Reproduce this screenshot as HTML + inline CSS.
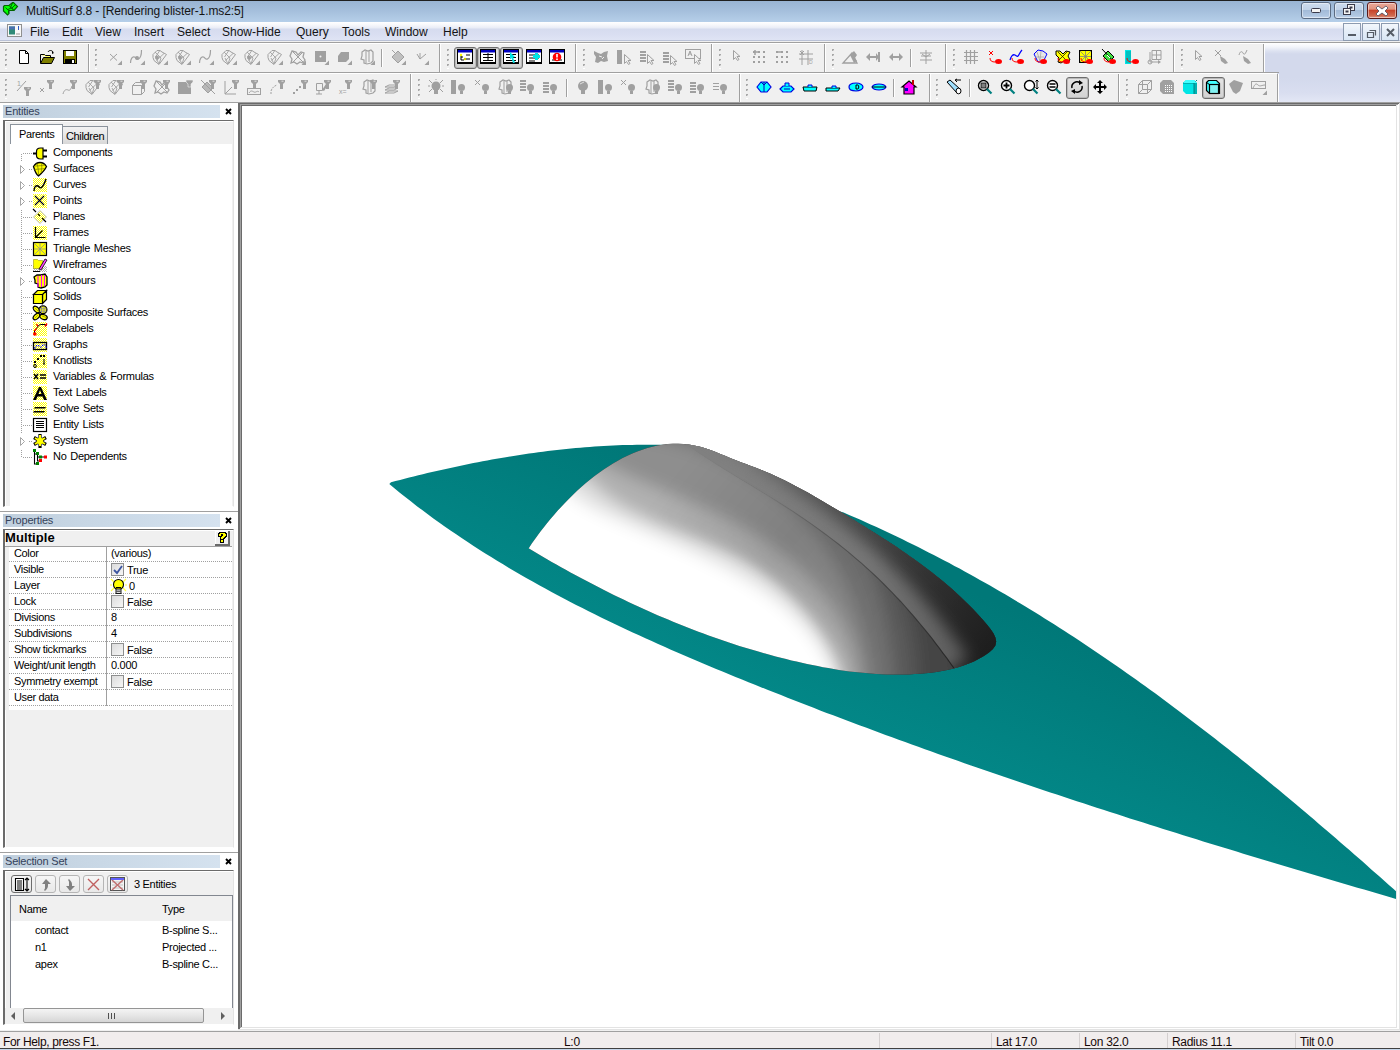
<!DOCTYPE html>
<html><head><meta charset="utf-8"><title>MultiSurf</title>
<style>
*{box-sizing:border-box}
html,body{margin:0;padding:0;width:1400px;height:1050px;overflow:hidden;background:#fff;font-family:"Liberation Sans", sans-serif;color:#000}
.a{position:absolute}
svg{overflow:visible}
</style></head><body>
<svg width="0" height="0" style="position:absolute"><defs>
<pattern id="dy" width="2" height="2" patternUnits="userSpaceOnUse"><rect width="2" height="2" fill="#fff"/><rect width="1" height="1" fill="#ff0"/><rect x="1" y="1" width="1" height="1" fill="#ff0"/></pattern>
<pattern id="dg" width="2" height="2" patternUnits="userSpaceOnUse"><rect width="2" height="2" fill="#fff"/><rect width="1" height="1" fill="#b0b0b0"/><rect x="1" y="1" width="1" height="1" fill="#b0b0b0"/></pattern>
</defs></svg>

<div class="a" style="left:0px;top:0px;width:1400px;height:1px;background:#1f1f1f;"></div>
<div class="a" style="left:0px;top:1px;width:1400px;height:21px;background:linear-gradient(#99b4d3,#a6c0dd 50%,#b6cfe9);"></div>
<svg class="a" style="left:0px;top:0px;" width="20" height="17" viewBox="0 0 20 17"><path d="M3.5 6.5L4.5 5.5H9L12.5 2.5H13.5L17.5 6.5L14 10.5H9V13.5L7.5 15L3.5 11Z" fill="#00ff00" stroke="#006400" stroke-width="1.2"/><path d="M5.5 7.5L8.5 10.5V13M9 5.5L14 10.5M12.5 3L10.5 7.5L13.5 9.5M8 9.5L11 8M15 5L12 8" fill="none" stroke="#006400" stroke-width="1"/></svg>
<div class="a" style="left:26px;top:4.84px;font-size:12px;line-height:12px;color:#141414;white-space:nowrap;letter-spacing:-0.1px">MultiSurf 8.8 - [Rendering blister-1.ms2:5]</div>
<div class="a" style="left:1301px;top:2px;width:30px;height:17px;border:1px solid #5b6b82;border-radius:3px;background:linear-gradient(#cddcee 0%,#c0d2e8 45%,#a3bbd8 50%,#b1c7e2 85%,#c6d8ee 100%);box-shadow:inset 0 0 0 1px rgba(255,255,255,.45)"></div>
<div class="a" style="left:1334px;top:2px;width:30px;height:17px;border:1px solid #5b6b82;border-radius:3px;background:linear-gradient(#cddcee 0%,#c0d2e8 45%,#a3bbd8 50%,#b1c7e2 85%,#c6d8ee 100%);box-shadow:inset 0 0 0 1px rgba(255,255,255,.45)"></div>
<div class="a" style="left:1367px;top:2px;width:30px;height:17px;border:1px solid #5a1a1a;border-radius:3px;background:linear-gradient(#eaa899 0%,#e09480 40%,#c8442b 50%,#d06a50 85%,#e39a88 100%);box-shadow:inset 0 0 0 1px rgba(255,255,255,.45)"></div>
<svg class="a" style="left:1311px;top:8px;" width="10" height="5" viewBox="0 0 10 5"><rect x="0.5" y="0.5" width="9" height="4" rx="1" fill="#f4f4f4" stroke="#3a3a4a"/></svg>
<svg class="a" style="left:1343px;top:4px;" width="12" height="11" viewBox="0 0 12 11"><rect x="4.5" y="0.5" width="7" height="6" fill="#f4f4f4" stroke="#3a3a4a"/><rect x="6.5" y="2.5" width="3" height="2" fill="#3a3a4a"/><rect x="0.5" y="4.5" width="7" height="6" fill="#f4f4f4" stroke="#3a3a4a"/><rect x="2.5" y="6.5" width="3" height="2" fill="#3a3a4a"/></svg>
<svg class="a" style="left:1376px;top:5px;" width="12" height="12" viewBox="0 0 12 12"><path d="M2 1l4 3 4-3 2 2-3 3 3 3-2 2-4-3-4 3-2-2 3-3-3-3z" fill="#fff" stroke="#4a4a5a" stroke-width=".8"/></svg>
<div class="a" style="left:0px;top:22px;width:1400px;height:18px;background:linear-gradient(#ffffff 0px,#f6f7fb 3px,#e9ecf6 6px,#d6dcef 7px,#d9def1 12px,#dfe4f4 18px);"></div>
<div class="a" style="left:0px;top:40px;width:1400px;height:1px;background:#b9c1d6;"></div>
<div class="a" style="left:0px;top:41px;width:1400px;height:1px;background:#f0f0f0;"></div>
<svg class="a" style="left:7px;top:24px;" width="15" height="13" viewBox="0 0 15 13"><rect x="0.5" y="0.5" width="14" height="12" fill="#f8f8f8" stroke="#909090"/><rect x="2" y="2.5" width="6" height="8" fill="#2f8a78"/><rect x="2" y="2.5" width="6" height="3" fill="#4a70b0"/><rect x="11" y="2" width="1" height="4" fill="#2a5ac0"/><rect x="9" y="9" width="4" height="2" fill="#c8c8c8"/></svg>
<div class="a" style="left:30px;top:25.84px;font-size:12px;line-height:12px;color:#141414;white-space:nowrap;letter-spacing:0px">File</div>
<div class="a" style="left:62px;top:25.84px;font-size:12px;line-height:12px;color:#141414;white-space:nowrap;letter-spacing:0px">Edit</div>
<div class="a" style="left:95px;top:25.84px;font-size:12px;line-height:12px;color:#141414;white-space:nowrap;letter-spacing:0px">View</div>
<div class="a" style="left:134px;top:25.84px;font-size:12px;line-height:12px;color:#141414;white-space:nowrap;letter-spacing:0px">Insert</div>
<div class="a" style="left:177px;top:25.84px;font-size:12px;line-height:12px;color:#141414;white-space:nowrap;letter-spacing:0px">Select</div>
<div class="a" style="left:222px;top:25.84px;font-size:12px;line-height:12px;color:#141414;white-space:nowrap;letter-spacing:0px">Show-Hide</div>
<div class="a" style="left:296px;top:25.84px;font-size:12px;line-height:12px;color:#141414;white-space:nowrap;letter-spacing:0px">Query</div>
<div class="a" style="left:342px;top:25.84px;font-size:12px;line-height:12px;color:#141414;white-space:nowrap;letter-spacing:0px">Tools</div>
<div class="a" style="left:385px;top:25.84px;font-size:12px;line-height:12px;color:#141414;white-space:nowrap;letter-spacing:0px">Window</div>
<div class="a" style="left:443px;top:25.84px;font-size:12px;line-height:12px;color:#141414;white-space:nowrap;letter-spacing:0px">Help</div>
<div class="a" style="left:1343px;top:23px;width:18px;height:18px;border:1px solid #8d9bb0;background:linear-gradient(#f3f7fc,#e4edf8 50%,#d9e6f5)"></div>
<div class="a" style="left:1362px;top:23px;width:18px;height:18px;border:1px solid #8d9bb0;background:linear-gradient(#f3f7fc,#e4edf8 50%,#d9e6f5)"></div>
<div class="a" style="left:1381px;top:23px;width:18px;height:18px;border:1px solid #8d9bb0;background:linear-gradient(#f3f7fc,#e4edf8 50%,#d9e6f5)"></div>
<svg class="a" style="left:1348px;top:34px;" width="8" height="2" viewBox="0 0 8 2"><rect width="8" height="2" fill="#555c66"/></svg>
<svg class="a" style="left:1367px;top:28px;" width="10" height="10" viewBox="0 0 10 10"><path d="M2.5 2.5h6v5M0.5 4.5h6v5h-6z" fill="none" stroke="#555c66" stroke-width="1.2"/></svg>
<svg class="a" style="left:1386px;top:28px;" width="9" height="9" viewBox="0 0 9 9"><path d="M1 1l7 7M8 1l-7 7" stroke="#555c66" stroke-width="2"/></svg>
<div class="a" style="left:0px;top:42px;width:1400px;height:1px;background:#a0a0a0;"></div>
<div class="a" style="left:0px;top:43px;width:1400px;height:59px;background:linear-gradient(#ffffff 0px,#f2f4fa 4px,#dde2f1 8px,#d3d9ec 11px,#d3d9ec 35px,#d9def0 50px,#e3e7f5 59px);"></div>
<div class="a" style="left:0px;top:102px;width:1400px;height:1px;background:#a0a0a0;"></div>
<div class="a" style="left:0px;top:43px;width:88px;height:1px;background:#fff;"></div>
<div class="a" style="left:0px;top:44px;width:88px;height:28px;background:#f0f0f0;"></div>
<div class="a" style="left:0px;top:72px;width:89px;height:1px;background:#a0a0a0;"></div>
<div class="a" style="left:88px;top:43px;width:351px;height:1px;background:#fff;"></div>
<div class="a" style="left:88px;top:44px;width:351px;height:28px;background:#f0f0f0;"></div>
<div class="a" style="left:88px;top:72px;width:352px;height:1px;background:#a0a0a0;"></div>
<div class="a" style="left:439px;top:43px;width:136px;height:1px;background:#fff;"></div>
<div class="a" style="left:439px;top:44px;width:136px;height:28px;background:#f0f0f0;"></div>
<div class="a" style="left:439px;top:72px;width:137px;height:1px;background:#a0a0a0;"></div>
<div class="a" style="left:575px;top:43px;width:136px;height:1px;background:#fff;"></div>
<div class="a" style="left:575px;top:44px;width:136px;height:28px;background:#f0f0f0;"></div>
<div class="a" style="left:575px;top:72px;width:137px;height:1px;background:#a0a0a0;"></div>
<div class="a" style="left:711px;top:43px;width:113px;height:1px;background:#fff;"></div>
<div class="a" style="left:711px;top:44px;width:113px;height:28px;background:#f0f0f0;"></div>
<div class="a" style="left:711px;top:72px;width:114px;height:1px;background:#a0a0a0;"></div>
<div class="a" style="left:824px;top:43px;width:121px;height:1px;background:#fff;"></div>
<div class="a" style="left:824px;top:44px;width:121px;height:28px;background:#f0f0f0;"></div>
<div class="a" style="left:824px;top:72px;width:122px;height:1px;background:#a0a0a0;"></div>
<div class="a" style="left:945px;top:43px;width:228px;height:1px;background:#fff;"></div>
<div class="a" style="left:945px;top:44px;width:228px;height:28px;background:#f0f0f0;"></div>
<div class="a" style="left:945px;top:72px;width:229px;height:1px;background:#a0a0a0;"></div>
<div class="a" style="left:1173px;top:43px;width:90px;height:1px;background:#fff;"></div>
<div class="a" style="left:1173px;top:44px;width:90px;height:28px;background:#f0f0f0;"></div>
<div class="a" style="left:1173px;top:72px;width:91px;height:1px;background:#a0a0a0;"></div>
<div class="a" style="left:0px;top:73px;width:410px;height:1px;background:#fff;"></div>
<div class="a" style="left:0px;top:74px;width:410px;height:28px;background:#f0f0f0;"></div>
<div class="a" style="left:0px;top:102px;width:411px;height:1px;background:#a0a0a0;"></div>
<div class="a" style="left:410px;top:73px;width:329px;height:1px;background:#fff;"></div>
<div class="a" style="left:410px;top:74px;width:329px;height:28px;background:#f0f0f0;"></div>
<div class="a" style="left:410px;top:102px;width:330px;height:1px;background:#a0a0a0;"></div>
<div class="a" style="left:739px;top:73px;width:190px;height:1px;background:#fff;"></div>
<div class="a" style="left:739px;top:74px;width:190px;height:28px;background:#f0f0f0;"></div>
<div class="a" style="left:739px;top:102px;width:191px;height:1px;background:#a0a0a0;"></div>
<div class="a" style="left:929px;top:73px;width:189px;height:1px;background:#fff;"></div>
<div class="a" style="left:929px;top:74px;width:189px;height:28px;background:#f0f0f0;"></div>
<div class="a" style="left:929px;top:102px;width:190px;height:1px;background:#a0a0a0;"></div>
<div class="a" style="left:1118px;top:73px;width:159px;height:1px;background:#fff;"></div>
<div class="a" style="left:1118px;top:74px;width:159px;height:28px;background:#f0f0f0;"></div>
<div class="a" style="left:1118px;top:102px;width:160px;height:1px;background:#a0a0a0;"></div>
<div class="a" style="left:1264px;top:72px;width:15px;height:1px;background:#a0a0a0;"></div>
<div class="a" style="left:88px;top:44px;width:1px;height:28px;background:#a0a0a0;"></div>
<div class="a" style="left:89px;top:44px;width:1px;height:28px;background:#fff;"></div>
<div class="a" style="left:439px;top:44px;width:1px;height:28px;background:#a0a0a0;"></div>
<div class="a" style="left:440px;top:44px;width:1px;height:28px;background:#fff;"></div>
<div class="a" style="left:575px;top:44px;width:1px;height:28px;background:#a0a0a0;"></div>
<div class="a" style="left:576px;top:44px;width:1px;height:28px;background:#fff;"></div>
<div class="a" style="left:711px;top:44px;width:1px;height:28px;background:#a0a0a0;"></div>
<div class="a" style="left:712px;top:44px;width:1px;height:28px;background:#fff;"></div>
<div class="a" style="left:824px;top:44px;width:1px;height:28px;background:#a0a0a0;"></div>
<div class="a" style="left:825px;top:44px;width:1px;height:28px;background:#fff;"></div>
<div class="a" style="left:945px;top:44px;width:1px;height:28px;background:#a0a0a0;"></div>
<div class="a" style="left:946px;top:44px;width:1px;height:28px;background:#fff;"></div>
<div class="a" style="left:1173px;top:44px;width:1px;height:28px;background:#a0a0a0;"></div>
<div class="a" style="left:1174px;top:44px;width:1px;height:28px;background:#fff;"></div>
<div class="a" style="left:1263px;top:44px;width:1px;height:28px;background:#a0a0a0;"></div>
<div class="a" style="left:1264px;top:44px;width:1px;height:28px;background:#fff;"></div>
<div class="a" style="left:410px;top:74px;width:1px;height:28px;background:#a0a0a0;"></div>
<div class="a" style="left:411px;top:74px;width:1px;height:28px;background:#fff;"></div>
<div class="a" style="left:739px;top:74px;width:1px;height:28px;background:#a0a0a0;"></div>
<div class="a" style="left:740px;top:74px;width:1px;height:28px;background:#fff;"></div>
<div class="a" style="left:929px;top:74px;width:1px;height:28px;background:#a0a0a0;"></div>
<div class="a" style="left:930px;top:74px;width:1px;height:28px;background:#fff;"></div>
<div class="a" style="left:1118px;top:74px;width:1px;height:28px;background:#a0a0a0;"></div>
<div class="a" style="left:1119px;top:74px;width:1px;height:28px;background:#fff;"></div>
<div class="a" style="left:1277px;top:74px;width:1px;height:28px;background:#a0a0a0;"></div>
<div class="a" style="left:1278px;top:74px;width:1px;height:28px;background:#fff;"></div>
<div class="a" style="left:5px;top:49px;width:2px;height:2px;background:#a8a8a8;"></div>
<div class="a" style="left:6px;top:50px;width:1px;height:1px;background:#d0d0d0;"></div>
<div class="a" style="left:5px;top:54px;width:2px;height:2px;background:#a8a8a8;"></div>
<div class="a" style="left:6px;top:55px;width:1px;height:1px;background:#d0d0d0;"></div>
<div class="a" style="left:5px;top:59px;width:2px;height:2px;background:#a8a8a8;"></div>
<div class="a" style="left:6px;top:60px;width:1px;height:1px;background:#d0d0d0;"></div>
<div class="a" style="left:5px;top:64px;width:2px;height:2px;background:#a8a8a8;"></div>
<div class="a" style="left:6px;top:65px;width:1px;height:1px;background:#d0d0d0;"></div>
<div class="a" style="left:5px;top:68px;width:2px;height:1px;background:#ffffff;"></div>
<div class="a" style="left:95px;top:49px;width:2px;height:2px;background:#a8a8a8;"></div>
<div class="a" style="left:96px;top:50px;width:1px;height:1px;background:#d0d0d0;"></div>
<div class="a" style="left:95px;top:54px;width:2px;height:2px;background:#a8a8a8;"></div>
<div class="a" style="left:96px;top:55px;width:1px;height:1px;background:#d0d0d0;"></div>
<div class="a" style="left:95px;top:59px;width:2px;height:2px;background:#a8a8a8;"></div>
<div class="a" style="left:96px;top:60px;width:1px;height:1px;background:#d0d0d0;"></div>
<div class="a" style="left:95px;top:64px;width:2px;height:2px;background:#a8a8a8;"></div>
<div class="a" style="left:96px;top:65px;width:1px;height:1px;background:#d0d0d0;"></div>
<div class="a" style="left:95px;top:68px;width:2px;height:1px;background:#ffffff;"></div>
<div class="a" style="left:447px;top:49px;width:2px;height:2px;background:#a8a8a8;"></div>
<div class="a" style="left:448px;top:50px;width:1px;height:1px;background:#d0d0d0;"></div>
<div class="a" style="left:447px;top:54px;width:2px;height:2px;background:#a8a8a8;"></div>
<div class="a" style="left:448px;top:55px;width:1px;height:1px;background:#d0d0d0;"></div>
<div class="a" style="left:447px;top:59px;width:2px;height:2px;background:#a8a8a8;"></div>
<div class="a" style="left:448px;top:60px;width:1px;height:1px;background:#d0d0d0;"></div>
<div class="a" style="left:447px;top:64px;width:2px;height:2px;background:#a8a8a8;"></div>
<div class="a" style="left:448px;top:65px;width:1px;height:1px;background:#d0d0d0;"></div>
<div class="a" style="left:447px;top:68px;width:2px;height:1px;background:#ffffff;"></div>
<div class="a" style="left:583px;top:49px;width:2px;height:2px;background:#a8a8a8;"></div>
<div class="a" style="left:584px;top:50px;width:1px;height:1px;background:#d0d0d0;"></div>
<div class="a" style="left:583px;top:54px;width:2px;height:2px;background:#a8a8a8;"></div>
<div class="a" style="left:584px;top:55px;width:1px;height:1px;background:#d0d0d0;"></div>
<div class="a" style="left:583px;top:59px;width:2px;height:2px;background:#a8a8a8;"></div>
<div class="a" style="left:584px;top:60px;width:1px;height:1px;background:#d0d0d0;"></div>
<div class="a" style="left:583px;top:64px;width:2px;height:2px;background:#a8a8a8;"></div>
<div class="a" style="left:584px;top:65px;width:1px;height:1px;background:#d0d0d0;"></div>
<div class="a" style="left:583px;top:68px;width:2px;height:1px;background:#ffffff;"></div>
<div class="a" style="left:719px;top:49px;width:2px;height:2px;background:#a8a8a8;"></div>
<div class="a" style="left:720px;top:50px;width:1px;height:1px;background:#d0d0d0;"></div>
<div class="a" style="left:719px;top:54px;width:2px;height:2px;background:#a8a8a8;"></div>
<div class="a" style="left:720px;top:55px;width:1px;height:1px;background:#d0d0d0;"></div>
<div class="a" style="left:719px;top:59px;width:2px;height:2px;background:#a8a8a8;"></div>
<div class="a" style="left:720px;top:60px;width:1px;height:1px;background:#d0d0d0;"></div>
<div class="a" style="left:719px;top:64px;width:2px;height:2px;background:#a8a8a8;"></div>
<div class="a" style="left:720px;top:65px;width:1px;height:1px;background:#d0d0d0;"></div>
<div class="a" style="left:719px;top:68px;width:2px;height:1px;background:#ffffff;"></div>
<div class="a" style="left:832px;top:49px;width:2px;height:2px;background:#a8a8a8;"></div>
<div class="a" style="left:833px;top:50px;width:1px;height:1px;background:#d0d0d0;"></div>
<div class="a" style="left:832px;top:54px;width:2px;height:2px;background:#a8a8a8;"></div>
<div class="a" style="left:833px;top:55px;width:1px;height:1px;background:#d0d0d0;"></div>
<div class="a" style="left:832px;top:59px;width:2px;height:2px;background:#a8a8a8;"></div>
<div class="a" style="left:833px;top:60px;width:1px;height:1px;background:#d0d0d0;"></div>
<div class="a" style="left:832px;top:64px;width:2px;height:2px;background:#a8a8a8;"></div>
<div class="a" style="left:833px;top:65px;width:1px;height:1px;background:#d0d0d0;"></div>
<div class="a" style="left:832px;top:68px;width:2px;height:1px;background:#ffffff;"></div>
<div class="a" style="left:953px;top:49px;width:2px;height:2px;background:#a8a8a8;"></div>
<div class="a" style="left:954px;top:50px;width:1px;height:1px;background:#d0d0d0;"></div>
<div class="a" style="left:953px;top:54px;width:2px;height:2px;background:#a8a8a8;"></div>
<div class="a" style="left:954px;top:55px;width:1px;height:1px;background:#d0d0d0;"></div>
<div class="a" style="left:953px;top:59px;width:2px;height:2px;background:#a8a8a8;"></div>
<div class="a" style="left:954px;top:60px;width:1px;height:1px;background:#d0d0d0;"></div>
<div class="a" style="left:953px;top:64px;width:2px;height:2px;background:#a8a8a8;"></div>
<div class="a" style="left:954px;top:65px;width:1px;height:1px;background:#d0d0d0;"></div>
<div class="a" style="left:953px;top:68px;width:2px;height:1px;background:#ffffff;"></div>
<div class="a" style="left:1181px;top:49px;width:2px;height:2px;background:#a8a8a8;"></div>
<div class="a" style="left:1182px;top:50px;width:1px;height:1px;background:#d0d0d0;"></div>
<div class="a" style="left:1181px;top:54px;width:2px;height:2px;background:#a8a8a8;"></div>
<div class="a" style="left:1182px;top:55px;width:1px;height:1px;background:#d0d0d0;"></div>
<div class="a" style="left:1181px;top:59px;width:2px;height:2px;background:#a8a8a8;"></div>
<div class="a" style="left:1182px;top:60px;width:1px;height:1px;background:#d0d0d0;"></div>
<div class="a" style="left:1181px;top:64px;width:2px;height:2px;background:#a8a8a8;"></div>
<div class="a" style="left:1182px;top:65px;width:1px;height:1px;background:#d0d0d0;"></div>
<div class="a" style="left:1181px;top:68px;width:2px;height:1px;background:#ffffff;"></div>
<div class="a" style="left:5px;top:79px;width:2px;height:2px;background:#a8a8a8;"></div>
<div class="a" style="left:6px;top:80px;width:1px;height:1px;background:#d0d0d0;"></div>
<div class="a" style="left:5px;top:84px;width:2px;height:2px;background:#a8a8a8;"></div>
<div class="a" style="left:6px;top:85px;width:1px;height:1px;background:#d0d0d0;"></div>
<div class="a" style="left:5px;top:89px;width:2px;height:2px;background:#a8a8a8;"></div>
<div class="a" style="left:6px;top:90px;width:1px;height:1px;background:#d0d0d0;"></div>
<div class="a" style="left:5px;top:94px;width:2px;height:2px;background:#a8a8a8;"></div>
<div class="a" style="left:6px;top:95px;width:1px;height:1px;background:#d0d0d0;"></div>
<div class="a" style="left:5px;top:98px;width:2px;height:1px;background:#ffffff;"></div>
<div class="a" style="left:418px;top:79px;width:2px;height:2px;background:#a8a8a8;"></div>
<div class="a" style="left:419px;top:80px;width:1px;height:1px;background:#d0d0d0;"></div>
<div class="a" style="left:418px;top:84px;width:2px;height:2px;background:#a8a8a8;"></div>
<div class="a" style="left:419px;top:85px;width:1px;height:1px;background:#d0d0d0;"></div>
<div class="a" style="left:418px;top:89px;width:2px;height:2px;background:#a8a8a8;"></div>
<div class="a" style="left:419px;top:90px;width:1px;height:1px;background:#d0d0d0;"></div>
<div class="a" style="left:418px;top:94px;width:2px;height:2px;background:#a8a8a8;"></div>
<div class="a" style="left:419px;top:95px;width:1px;height:1px;background:#d0d0d0;"></div>
<div class="a" style="left:418px;top:98px;width:2px;height:1px;background:#ffffff;"></div>
<div class="a" style="left:746px;top:79px;width:2px;height:2px;background:#a8a8a8;"></div>
<div class="a" style="left:747px;top:80px;width:1px;height:1px;background:#d0d0d0;"></div>
<div class="a" style="left:746px;top:84px;width:2px;height:2px;background:#a8a8a8;"></div>
<div class="a" style="left:747px;top:85px;width:1px;height:1px;background:#d0d0d0;"></div>
<div class="a" style="left:746px;top:89px;width:2px;height:2px;background:#a8a8a8;"></div>
<div class="a" style="left:747px;top:90px;width:1px;height:1px;background:#d0d0d0;"></div>
<div class="a" style="left:746px;top:94px;width:2px;height:2px;background:#a8a8a8;"></div>
<div class="a" style="left:747px;top:95px;width:1px;height:1px;background:#d0d0d0;"></div>
<div class="a" style="left:746px;top:98px;width:2px;height:1px;background:#ffffff;"></div>
<div class="a" style="left:936px;top:79px;width:2px;height:2px;background:#a8a8a8;"></div>
<div class="a" style="left:937px;top:80px;width:1px;height:1px;background:#d0d0d0;"></div>
<div class="a" style="left:936px;top:84px;width:2px;height:2px;background:#a8a8a8;"></div>
<div class="a" style="left:937px;top:85px;width:1px;height:1px;background:#d0d0d0;"></div>
<div class="a" style="left:936px;top:89px;width:2px;height:2px;background:#a8a8a8;"></div>
<div class="a" style="left:937px;top:90px;width:1px;height:1px;background:#d0d0d0;"></div>
<div class="a" style="left:936px;top:94px;width:2px;height:2px;background:#a8a8a8;"></div>
<div class="a" style="left:937px;top:95px;width:1px;height:1px;background:#d0d0d0;"></div>
<div class="a" style="left:936px;top:98px;width:2px;height:1px;background:#ffffff;"></div>
<div class="a" style="left:1126px;top:79px;width:2px;height:2px;background:#a8a8a8;"></div>
<div class="a" style="left:1127px;top:80px;width:1px;height:1px;background:#d0d0d0;"></div>
<div class="a" style="left:1126px;top:84px;width:2px;height:2px;background:#a8a8a8;"></div>
<div class="a" style="left:1127px;top:85px;width:1px;height:1px;background:#d0d0d0;"></div>
<div class="a" style="left:1126px;top:89px;width:2px;height:2px;background:#a8a8a8;"></div>
<div class="a" style="left:1127px;top:90px;width:1px;height:1px;background:#d0d0d0;"></div>
<div class="a" style="left:1126px;top:94px;width:2px;height:2px;background:#a8a8a8;"></div>
<div class="a" style="left:1127px;top:95px;width:1px;height:1px;background:#d0d0d0;"></div>
<div class="a" style="left:1126px;top:98px;width:2px;height:1px;background:#ffffff;"></div>
<div class="a" style="left:381px;top:49px;width:1px;height:18px;background:#a0a0a0;"></div>
<div class="a" style="left:382px;top:49px;width:1px;height:18px;background:#fff;"></div>
<div class="a" style="left:910px;top:49px;width:1px;height:18px;background:#a0a0a0;"></div>
<div class="a" style="left:911px;top:49px;width:1px;height:18px;background:#fff;"></div>
<div class="a" style="left:566px;top:79px;width:1px;height:18px;background:#a0a0a0;"></div>
<div class="a" style="left:567px;top:79px;width:1px;height:18px;background:#fff;"></div>
<div class="a" style="left:893px;top:79px;width:1px;height:18px;background:#a0a0a0;"></div>
<div class="a" style="left:894px;top:79px;width:1px;height:18px;background:#fff;"></div>
<div class="a" style="left:969px;top:79px;width:1px;height:18px;background:#a0a0a0;"></div>
<div class="a" style="left:970px;top:79px;width:1px;height:18px;background:#fff;"></div>
<div class="a" style="left:454px;top:47px;width:23px;height:22px;border:1px solid #6d6d6d;border-radius:3px;background:linear-gradient(#e4e4e4,#d2d2d2);box-shadow:inset 0 0 0 1px #b9b9b9"></div>
<div class="a" style="left:477px;top:47px;width:23px;height:22px;border:1px solid #6d6d6d;border-radius:3px;background:linear-gradient(#e4e4e4,#d2d2d2);box-shadow:inset 0 0 0 1px #b9b9b9"></div>
<div class="a" style="left:500px;top:47px;width:23px;height:22px;border:1px solid #6d6d6d;border-radius:3px;background:linear-gradient(#e4e4e4,#d2d2d2);box-shadow:inset 0 0 0 1px #b9b9b9"></div>
<div class="a" style="left:1066px;top:77px;width:23px;height:22px;border:1px solid #6d6d6d;border-radius:3px;background:linear-gradient(#e4e4e4,#d2d2d2);box-shadow:inset 0 0 0 1px #b9b9b9"></div>
<div class="a" style="left:1202px;top:77px;width:23px;height:22px;border:1px solid #6d6d6d;border-radius:3px;background:linear-gradient(#e4e4e4,#d2d2d2);box-shadow:inset 0 0 0 1px #b9b9b9"></div>
<svg class="a" style="left:16px;top:49px;" width="16" height="16" viewBox="0 0 16 16"><path d="M3.5 1.5h6l3 3v10h-9z" fill="#fff" stroke="#000"/><path d="M9.5 1.5v3h3" fill="none" stroke="#000"/></svg>
<svg class="a" style="left:39px;top:49px;" width="16" height="16" viewBox="0 0 16 16"><path d="M1.5 5.5h4l1 1h5v3" fill="#ffff60" stroke="#000"/><path d="M1.5 5.5v8.5" stroke="#000"/><path d="M1.5 14.5l3-6h11l-3 6z" fill="#808000" stroke="#000"/><path d="M9 3c1-2 4-2 5 0" fill="none" stroke="#000"/><path d="M13 2l2 2-2 1z" fill="#000"/></svg>
<svg class="a" style="left:62px;top:49px;" width="16" height="16" viewBox="0 0 16 16"><rect x="1.5" y="1.5" width="13" height="13" fill="#808000" stroke="#000"/><rect x="4" y="2" width="8" height="5" fill="#fff"/><rect x="3" y="10" width="10" height="5" fill="#000"/><rect x="10" y="11" width="2" height="3" fill="#fff"/></svg>
<svg class="a" style="left:106px;top:49px;" width="16" height="16" viewBox="0 0 16 16"><path d="M4 5l7 6.5M11 5l-7 6.5" stroke="#a0a0a0" stroke-width="1"/><path d="M16 11.5v4.5h-4.5z" fill="#a0a0a0"/></svg>
<svg class="a" style="left:129px;top:49px;" width="16" height="16" viewBox="0 0 16 16"><path d="M1.5 14c0-4 2-7 4-6s2 3 4 2 3-5 3-9" fill="none" stroke="#a0a0a0" stroke-width="1.2"/><circle cx="8" cy="9" r="2" fill="#a0a0a0"/><path d="M16 11.5v4.5h-4.5z" fill="#a0a0a0"/></svg>
<svg class="a" style="left:152px;top:49px;" width="16" height="16" viewBox="0 0 16 16"><path d="M1 5.5l4-4h3l2 1.5 4.5 2.5-7.5 10-5-4-1-3z" fill="none" stroke="#a0a0a0" stroke-width="1"/><path d="M3 3l6 6M12 4.5l-7.5 7M7.5 2l-4 6M4 9l3 6M9 9l-2 6" stroke="#a0a0a0" stroke-width="0.9" fill="none"/><circle cx="5" cy="8.5" r="2" fill="#a0a0a0"/><path d="M16 11.5v4.5h-4.5z" fill="#a0a0a0"/></svg>
<svg class="a" style="left:175px;top:49px;" width="16" height="16" viewBox="0 0 16 16"><path d="M1 5.5l4-4h3l2 1.5 4.5 2.5-7.5 10-5-4-1-3z" fill="none" stroke="#a0a0a0" stroke-width="1"/><path d="M3 3l6 6M12 4.5l-7.5 7M7.5 2l-4 6M4 9l3 6M9 9l-2 6" stroke="#a0a0a0" stroke-width="0.9" fill="none"/><circle cx="5" cy="8.5" r="2" fill="#a0a0a0"/><path d="M16 11.5v4.5h-4.5z" fill="#a0a0a0"/></svg>
<svg class="a" style="left:198px;top:49px;" width="16" height="16" viewBox="0 0 16 16"><path d="M1.5 14c0-4 2-7 4-6s2 3 4 2 3-5 3-9" fill="none" stroke="#a0a0a0" stroke-width="1.2"/><path d="M16 11.5v4.5h-4.5z" fill="#a0a0a0"/></svg>
<svg class="a" style="left:221px;top:49px;" width="16" height="16" viewBox="0 0 16 16"><path d="M1 5.5l4-4h3l2 1.5 4.5 2.5-7.5 10-5-4-1-3z" fill="none" stroke="#a0a0a0" stroke-width="1"/><path d="M3 3l6 6M12 4.5l-7.5 7M7.5 2l-4 6M4 9l3 6M9 9l-2 6" stroke="#a0a0a0" stroke-width="0.9" fill="none"/><path d="M16 11.5v4.5h-4.5z" fill="#a0a0a0"/></svg>
<svg class="a" style="left:244px;top:49px;" width="16" height="16" viewBox="0 0 16 16"><path d="M1 5.5l4-4h3l2 1.5 4.5 2.5-7.5 10-5-4-1-3z" fill="none" stroke="#a0a0a0" stroke-width="1"/><path d="M3 3l6 6M12 4.5l-7.5 7M7.5 2l-4 6M4 9l3 6M9 9l-2 6" stroke="#a0a0a0" stroke-width="0.9" fill="none"/><circle cx="5" cy="8.5" r="2" fill="#a0a0a0"/><path d="M16 11.5v4.5h-4.5z" fill="#a0a0a0"/></svg>
<svg class="a" style="left:267px;top:49px;" width="16" height="16" viewBox="0 0 16 16"><path d="M1 5.5l4-4h3l2 1.5 4.5 2.5-7.5 10-5-4-1-3z" fill="none" stroke="#a0a0a0" stroke-width="1"/><path d="M3 3l6 6M12 4.5l-7.5 7M7.5 2l-4 6M4 9l3 6M9 9l-2 6" stroke="#a0a0a0" stroke-width="0.9" fill="none"/><path d="M16 11.5v4.5h-4.5z" fill="#a0a0a0"/></svg>
<svg class="a" style="left:290px;top:49px;" width="16" height="16" viewBox="0 0 16 16"><path d="M2 2l4 1 2 3 3-3 3 1-1 4 2 3-2 3-3-1-3 2-3-2-3 1 1-4-2-3z" fill="none" stroke="#a0a0a0" stroke-width="1.3"/><path d="M3 3l10 10M13 3l-10 10" stroke="#a0a0a0" stroke-width="1"/><path d="M16 11.5v4.5h-4.5z" fill="#a0a0a0"/></svg>
<svg class="a" style="left:313px;top:49px;" width="16" height="16" viewBox="0 0 16 16"><rect x="2" y="2" width="11" height="11" fill="#a0a0a0"/><circle cx="7.5" cy="7.5" r="1" fill="#f0f0f0"/><path d="M16 11.5v4.5h-4.5z" fill="#a0a0a0"/></svg>
<svg class="a" style="left:336px;top:49px;" width="16" height="16" viewBox="0 0 16 16"><path d="M5 3h8v7l-3 3h-8v-6z" fill="#a0a0a0"/><path d="M16 11.5v4.5h-4.5z" fill="#a0a0a0"/></svg>
<svg class="a" style="left:359px;top:49px;" width="16" height="16" viewBox="0 0 16 16"><path d="M3 3l3-2 3 1 3-1 2 2v9l-2 2-4 1-3-1v-3l-3-1 1-3z" fill="none" stroke="#a0a0a0" stroke-width="1.2"/><path d="M7 2v12M10 2v11" stroke="#a0a0a0" stroke-width="1"/><path d="M16 11.5v4.5h-4.5z" fill="#a0a0a0"/></svg>
<svg class="a" style="left:390px;top:49px;" width="16" height="16" viewBox="0 0 16 16"><path d="M8 2l6 6-6 6-6-6z" fill="#a0a0a0" fill-opacity="0.6" stroke="#a0a0a0"/><path d="M2 1l3 3" stroke="#a0a0a0"/><path d="M16 11.5v4.5h-4.5z" fill="#a0a0a0"/></svg>
<svg class="a" style="left:413px;top:49px;" width="16" height="16" viewBox="0 0 16 16"><path d="M4 5l3 5 6-5M7 10v-6" fill="none" stroke="#a0a0a0"/><path d="M16 11.5v4.5h-4.5z" fill="#a0a0a0"/></svg>
<svg class="a" style="left:457px;top:49px;" width="16" height="16" viewBox="0 0 16 16"><rect x="0.5" y="0.5" width="15" height="14" fill="#fff" stroke="#000"/><rect x="1" y="1" width="14" height="2.5" fill="#0000c0"/><rect x="1" y="13" width="14" height="1.5" fill="#000"/><path d="M4 6v5h3M4 8h2" fill="none" stroke="#000"/><circle cx="4" cy="6" r="1.2" fill="#ff0"/><circle cx="8" cy="10" r="1.2" fill="#cc0"/><path d="M9 6h4M9 10h4" stroke="#000"/></svg>
<svg class="a" style="left:480px;top:49px;" width="16" height="16" viewBox="0 0 16 16"><rect x="0.5" y="0.5" width="15" height="14" fill="#fff" stroke="#000"/><rect x="1" y="1" width="14" height="2.5" fill="#0000c0"/><rect x="1" y="13" width="14" height="1.5" fill="#000"/><path d="M3 5.5h10M3 8.5h10M3 11.5h10M8 4v8" stroke="#000"/></svg>
<svg class="a" style="left:503px;top:49px;" width="16" height="16" viewBox="0 0 16 16"><rect x="0.5" y="0.5" width="15" height="14" fill="#fff" stroke="#000"/><rect x="1" y="1" width="14" height="2.5" fill="#0000c0"/><rect x="1" y="13" width="14" height="1.5" fill="#000"/><path d="M3 5.5h10M3 8.5h10M3 11.5h10" stroke="#000"/><path d="M7 3l5 5-2 .5 2 5-2 .5-1.5-5-1.5 1.5z" fill="#00e5e5"/></svg>
<svg class="a" style="left:526px;top:49px;" width="16" height="16" viewBox="0 0 16 16"><rect x="0.5" y="0.5" width="15" height="14" fill="#fff" stroke="#000"/><rect x="1" y="1" width="14" height="2.5" fill="#0000c0"/><rect x="1" y="13" width="14" height="1.5" fill="#000"/><path d="M3 6h10M3 9h10M3 12h6" stroke="#000"/><path d="M9 4h3v2h2v3h-2v2h-3v-2h-2v-3h2z" fill="#00e5e5"/></svg>
<svg class="a" style="left:549px;top:49px;" width="16" height="16" viewBox="0 0 16 16"><rect x="0.5" y="0.5" width="15" height="14" fill="#fff" stroke="#000"/><rect x="1" y="1" width="14" height="2.5" fill="#0000c0"/><rect x="1" y="13" width="14" height="1.5" fill="#000"/><path d="M3 11h10" stroke="#000"/><circle cx="8" cy="8" r="4.3" fill="#f00"/><path d="M8 5v3.5" stroke="#fff" stroke-width="1.6"/><rect x="7.2" y="9.5" width="1.6" height="1.5" fill="#fff"/></svg>
<svg class="a" style="left:593px;top:49px;" width="16" height="16" viewBox="0 0 16 16"><path d="M1 2l4 2 3 1 3-2 4-1-1 5 1 5-4 1-3-1-3 2-3-1 1-5-2-3z" fill="#a0a0a0"/><path d="M6 7l3 1M9 10l2-2" stroke="#f0f0f0"/></svg>
<svg class="a" style="left:616px;top:49px;" width="16" height="16" viewBox="0 0 16 16"><rect x="1" y="1" width="5" height="14" fill="#a0a0a0"/><path d="M8.5 5.5v9l2-2 2 3 1.5-1-2-3h3z" fill="#f0f0f0" stroke="#a0a0a0" stroke-width="1"/></svg>
<svg class="a" style="left:639px;top:49px;" width="16" height="16" viewBox="0 0 16 16"><rect x="1" y="2" width="6" height="2" fill="#a0a0a0"/><rect x="1" y="5" width="6" height="2" fill="#a0a0a0"/><rect x="1" y="8" width="6" height="2" fill="#a0a0a0"/><rect x="1" y="11" width="6" height="2" fill="#a0a0a0"/><path d="M8.5 5.5v9l2-2 2 3 1.5-1-2-3h3z" fill="#f0f0f0" stroke="#a0a0a0" stroke-width="1"/></svg>
<svg class="a" style="left:662px;top:49px;" width="16" height="16" viewBox="0 0 16 16"><rect x="1" y="3" width="6" height="2" fill="#a0a0a0"/><rect x="1" y="6" width="6" height="2" fill="#a0a0a0"/><rect x="1" y="9" width="6" height="2" fill="#a0a0a0"/><rect x="1" y="12" width="6" height="2" fill="#a0a0a0"/><path d="M8.5 6.5v9l2-2 2 3 1.5-1-2-3h3z" fill="#f0f0f0" stroke="#a0a0a0" stroke-width="1"/></svg>
<svg class="a" style="left:685px;top:49px;" width="16" height="16" viewBox="0 0 16 16"><rect x="0.5" y="0.5" width="15" height="9" fill="none" stroke="#a0a0a0"/><path d="M3 7l2-5 2 5M4 5h2" fill="none" stroke="#a0a0a0"/><path d="M9.5 5.5v9l2-2 2 3 1.5-1-2-3h3z" fill="#f0f0f0" stroke="#a0a0a0" stroke-width="1"/></svg>
<svg class="a" style="left:729px;top:49px;" width="16" height="16" viewBox="0 0 16 16"><path d="M4.5 1.5v9l2-2 2 3 1.5-1-2-3h3z" fill="#f0f0f0" stroke="#a0a0a0" stroke-width="1"/></svg>
<svg class="a" style="left:752px;top:49px;" width="16" height="16" viewBox="0 0 16 16"><rect x="1" y="2" width="2" height="2" fill="#a0a0a0"/><rect x="1" y="7" width="2" height="2" fill="#a0a0a0"/><rect x="1" y="12" width="2" height="2" fill="#a0a0a0"/><rect x="6" y="2" width="2" height="2" fill="#a0a0a0"/><rect x="6" y="7" width="2" height="2" fill="#a0a0a0"/><rect x="6" y="12" width="2" height="2" fill="#a0a0a0"/><rect x="11" y="2" width="2" height="2" fill="#a0a0a0"/><rect x="11" y="7" width="2" height="2" fill="#a0a0a0"/><rect x="11" y="12" width="2" height="2" fill="#a0a0a0"/><path d="M1 3h5M3 1v5" stroke="#a0a0a0" stroke-width="1.5"/></svg>
<svg class="a" style="left:775px;top:49px;" width="16" height="16" viewBox="0 0 16 16"><rect x="1" y="2" width="2" height="2" fill="#a0a0a0"/><rect x="1" y="7" width="2" height="2" fill="#a0a0a0"/><rect x="1" y="12" width="2" height="2" fill="#a0a0a0"/><rect x="6" y="2" width="2" height="2" fill="#a0a0a0"/><rect x="6" y="7" width="2" height="2" fill="#a0a0a0"/><rect x="6" y="12" width="2" height="2" fill="#a0a0a0"/><rect x="11" y="2" width="2" height="2" fill="#a0a0a0"/><rect x="11" y="7" width="2" height="2" fill="#a0a0a0"/><rect x="11" y="12" width="2" height="2" fill="#a0a0a0"/><path d="M1 3h5" stroke="#a0a0a0" stroke-width="1.5"/></svg>
<svg class="a" style="left:798px;top:49px;" width="16" height="16" viewBox="0 0 16 16"><path d="M1 5h14M1 10h14M4 1v15M10 1v15" stroke="#a0a0a0"/><path d="M2 2l4 4M6 2l-4 4" stroke="#a0a0a0"/><text x="11" y="15" font-size="5" fill="#a0a0a0" font-family="Liberation Sans">D</text></svg>
<svg class="a" style="left:842px;top:49px;" width="16" height="16" viewBox="0 0 16 16"><path d="M1 14h14l-5-10z" fill="none" stroke="#a0a0a0" stroke-width="1.3"/><path d="M8 6l4-4 3 4-2 3 2 3-3 2z" fill="#a0a0a0"/></svg>
<svg class="a" style="left:865px;top:49px;" width="16" height="16" viewBox="0 0 16 16"><path d="M1 8l4-4v3h6v-3l3 4-3 4v-3h-6v3z" fill="#a0a0a0"/><rect x="13" y="3" width="2" height="10" fill="#a0a0a0"/></svg>
<svg class="a" style="left:888px;top:49px;" width="16" height="16" viewBox="0 0 16 16"><path d="M1 8l4-4v3h6v-3l4 4-4 4v-3h-6v3z" fill="#a0a0a0"/></svg>
<svg class="a" style="left:918px;top:49px;" width="16" height="16" viewBox="0 0 16 16"><path d="M8 1v14M2 4h12M2 11h12M3 7h10" stroke="#a0a0a0"/><path d="M4 5l4 3 4-3" fill="none" stroke="#a0a0a0"/></svg>
<svg class="a" style="left:963px;top:49px;" width="16" height="16" viewBox="0 0 16 16"><path d="M1 3.5h14M1 7.5h14M1 11.5h14M3.5 1v14M7.5 1v14M11.5 1v14" stroke="#a0a0a0" stroke-width="1.2"/></svg>
<svg class="a" style="left:987px;top:49px;" width="16" height="16" viewBox="0 0 16 16"><path d="M2 2l4 4M6 2l-4 4" stroke="#f00"/><path d="M3 9c0 3 2 4 5 4" fill="none" stroke="#f00"/><ellipse cx="11.5" cy="12.5" rx="3.5" ry="2.5" fill="#f00"/></svg>
<svg class="a" style="left:1009px;top:49px;" width="16" height="16" viewBox="0 0 16 16"><path d="M1 11c1-4 3-6 5-5s2 2 3 1 2-4 4-6" fill="none" stroke="#00f" stroke-width="1.3"/><path d="M3 9c0 3 2 4 5 4" fill="none" stroke="#f00"/><ellipse cx="11.5" cy="12.5" rx="3.5" ry="2.5" fill="#f00"/></svg>
<svg class="a" style="left:1032px;top:49px;" width="16" height="16" viewBox="0 0 16 16"><path d="M2 5l4-4 5 1 4 3-4 8-5 0z" fill="#e8e8e8" stroke="#00f"/><path d="M5 3l3 9M9 2l-1 10M3 8h9" stroke="#a0a0a0" stroke-width=".7"/><path d="M3 9c0 3 2 4 5 4" fill="none" stroke="#f00"/><ellipse cx="11.5" cy="12.5" rx="3.5" ry="2.5" fill="#f00"/></svg>
<svg class="a" style="left:1055px;top:49px;" width="16" height="16" viewBox="0 0 16 16"><path d="M1 2l4 0 3 3 3-3 4 1-2 4 2 4-3 3-3-2-3 2-3-1 1-4-3-3z" fill="#ff0" stroke="#000"/><path d="M3 3l9 9M12 3l-9 9" stroke="#000" stroke-width=".7"/><path d="M3 9c0 3 2 4 5 4" fill="none" stroke="#f00"/><ellipse cx="11.5" cy="12.5" rx="3.5" ry="2.5" fill="#f00"/></svg>
<svg class="a" style="left:1078px;top:49px;" width="16" height="16" viewBox="0 0 16 16"><rect x="1.5" y="1.5" width="12" height="12" fill="#ff0" stroke="#000"/><path d="M2 2l11 11M13 2l-11 11M7.5 2v11M2 7.5h11" stroke="#808080" stroke-width=".8"/><path d="M3 9c0 3 2 4 5 4" fill="none" stroke="#f00"/><ellipse cx="11.5" cy="12.5" rx="3.5" ry="2.5" fill="#f00"/></svg>
<svg class="a" style="left:1101px;top:49px;" width="16" height="16" viewBox="0 0 16 16"><path d="M7 2l6 6-5 5-6-6z" fill="#40e040" stroke="#000"/><path d="M1 0l12 13" stroke="#000"/><path d="M6 6l3 3" stroke="#fff"/><path d="M3 9c0 3 2 4 5 4" fill="none" stroke="#f00"/><ellipse cx="11.5" cy="12.5" rx="3.5" ry="2.5" fill="#f00"/></svg>
<svg class="a" style="left:1124px;top:49px;" width="16" height="16" viewBox="0 0 16 16"><rect x="1" y="1" width="6" height="14" fill="#00e5e5"/><path d="M2 3h5" stroke="#008080" stroke-width=".7"/><path d="M2 5h5" stroke="#008080" stroke-width=".7"/><path d="M2 7h5" stroke="#008080" stroke-width=".7"/><path d="M2 9h5" stroke="#008080" stroke-width=".7"/><path d="M2 11h5" stroke="#008080" stroke-width=".7"/><path d="M2 13h5" stroke="#008080" stroke-width=".7"/><path d="M3 9c0 3 2 4 5 4" fill="none" stroke="#f00"/><ellipse cx="11.5" cy="12.5" rx="3.5" ry="2.5" fill="#f00"/></svg>
<svg class="a" style="left:1147px;top:49px;" width="16" height="16" viewBox="0 0 16 16"><path d="M5 1.5h9v9h-9zM9.5 1.5v9M5 6h9" fill="none" stroke="#a0a0a0"/><path d="M3 3v10h8" fill="none" stroke="#a0a0a0"/><circle cx="3" cy="13" r="2" fill="none" stroke="#a0a0a0"/><path d="M11 11l3 2-3 2z" fill="#a0a0a0"/></svg>
<svg class="a" style="left:1191px;top:49px;" width="16" height="16" viewBox="0 0 16 16"><path d="M4.5 1.5v9l2-2 2 3 1.5-1-2-3h3z" fill="#f0f0f0" stroke="#a0a0a0" stroke-width="1"/></svg>
<svg class="a" style="left:1214px;top:49px;" width="16" height="16" viewBox="0 0 16 16"><path d="M1 1l6 6M7 1l-6 6" stroke="#a0a0a0"/><path d="M6 7l5 3 3 4-3 1-4-3z" fill="#a0a0a0"/></svg>
<svg class="a" style="left:1238px;top:49px;" width="16" height="16" viewBox="0 0 16 16"><path d="M1 6c1-4 3-4 4-2s2 2 4-3" fill="none" stroke="#a0a0a0"/><path d="M5 7l5 3 3 4-3 1-4-3z" fill="#a0a0a0"/></svg>
<svg class="a" style="left:16px;top:79px;" width="16" height="16" viewBox="0 0 16 16"><path d="M1 12l9-10" stroke="#a0a0a0"/><text x="1" y="7" font-size="7" fill="#a0a0a0" font-family="Liberation Sans">1</text><path d="M8 8h7v2l-2 2v5h-3v-5l-2-2z" fill="#a0a0a0"/><path d="M11.5 9.2h2" stroke="#f0f0f0" stroke-width="0.8"/></svg>
<svg class="a" style="left:39px;top:79px;" width="16" height="16" viewBox="0 0 16 16"><path d="M1 9l4 4M5 9l-4 4" stroke="#a0a0a0"/><path d="M8 1h7v2l-2 2v5h-3v-5l-2-2z" fill="#a0a0a0"/><path d="M11.5 2.2h2" stroke="#f0f0f0" stroke-width="0.8"/></svg>
<svg class="a" style="left:62px;top:79px;" width="16" height="16" viewBox="0 0 16 16"><path d="M1 15c1-4 3-5 5-4s3-1 4-4" fill="none" stroke="#a0a0a0"/><path d="M8 1h7v2l-2 2v5h-3v-5l-2-2z" fill="#a0a0a0"/><path d="M11.5 2.2h2" stroke="#f0f0f0" stroke-width="0.8"/></svg>
<svg class="a" style="left:85px;top:79px;" width="16" height="16" viewBox="0 0 16 16"><path d="M1 5.5l4-4h3l2 1.5 4.5 2.5-7.5 10-5-4-1-3z" fill="none" stroke="#a0a0a0" stroke-width="1"/><path d="M3 3l6 6M12 4.5l-7.5 7M7.5 2l-4 6M4 9l3 6M9 9l-2 6" stroke="#a0a0a0" stroke-width="0.9" fill="none"/><path d="M9 1h7v2l-2 2v5h-3v-5l-2-2z" fill="#a0a0a0"/><path d="M12.5 2.2h2" stroke="#f0f0f0" stroke-width="0.8"/></svg>
<svg class="a" style="left:108px;top:79px;" width="16" height="16" viewBox="0 0 16 16"><path d="M1 5.5l4-4h3l2 1.5 4.5 2.5-7.5 10-5-4-1-3z" fill="none" stroke="#a0a0a0" stroke-width="1"/><path d="M3 3l6 6M12 4.5l-7.5 7M7.5 2l-4 6M4 9l3 6M9 9l-2 6" stroke="#a0a0a0" stroke-width="0.9" fill="none"/><path d="M9 1h7v2l-2 2v5h-3v-5l-2-2z" fill="#a0a0a0"/><path d="M12.5 2.2h2" stroke="#f0f0f0" stroke-width="0.8"/></svg>
<svg class="a" style="left:131px;top:79px;" width="16" height="16" viewBox="0 0 16 16"><path d="M1.5 6.5h9v9h-9zM1.5 6.5l3-3h9v9l-3 3M10.5 6.5l3-3" fill="none" stroke="#a0a0a0"/><path d="M9 1h7v2l-2 2v5h-3v-5l-2-2z" fill="#a0a0a0"/><path d="M12.5 2.2h2" stroke="#f0f0f0" stroke-width="0.8"/></svg>
<svg class="a" style="left:154px;top:79px;" width="16" height="16" viewBox="0 0 16 16"><path d="M2 2l4 1 2 3 3-3 3 1-1 4 2 3-2 3-3-1-3 2-3-2-3 1 1-4-2-3z" fill="none" stroke="#a0a0a0" stroke-width="1.3"/><path d="M3 3l10 10M13 3l-10 10" stroke="#a0a0a0" stroke-width="1"/><path d="M9 1h7v2l-2 2v5h-3v-5l-2-2z" fill="#a0a0a0"/><path d="M12.5 2.2h2" stroke="#f0f0f0" stroke-width="0.8"/></svg>
<svg class="a" style="left:177px;top:79px;" width="16" height="16" viewBox="0 0 16 16"><rect x="1" y="3" width="13" height="12" fill="#a0a0a0"/><path d="M9 1h7v2l-2 2v3h-3v-3l-2-2z" fill="#a0a0a0" stroke="#f0f0f0" stroke-width=".6"/></svg>
<svg class="a" style="left:200px;top:79px;" width="16" height="16" viewBox="0 0 16 16"><path d="M7 3l6 6-5 5-6-6z" fill="#a0a0a0" fill-opacity=".7" stroke="#a0a0a0"/><path d="M1 1l14 14" stroke="#a0a0a0"/><path d="M9 1h7v2l-2 2v5h-3v-5l-2-2z" fill="#a0a0a0"/><path d="M12.5 2.2h2" stroke="#f0f0f0" stroke-width="0.8"/></svg>
<svg class="a" style="left:223px;top:79px;" width="16" height="16" viewBox="0 0 16 16"><path d="M2 2v13h11M2 15l7-7" fill="none" stroke="#a0a0a0"/><path d="M9 1h7v2l-2 2v5h-3v-5l-2-2z" fill="#a0a0a0"/><path d="M12.5 2.2h2" stroke="#f0f0f0" stroke-width="0.8"/></svg>
<svg class="a" style="left:246px;top:79px;" width="16" height="16" viewBox="0 0 16 16"><rect x="1.5" y="9.5" width="13" height="6" fill="none" stroke="#a0a0a0"/><path d="M3 14c2-3 3-2 5-1s3-2 5 0" fill="none" stroke="#a0a0a0"/><path d="M5 1h7v2l-2 2v5h-3v-5l-2-2z" fill="#a0a0a0"/><path d="M8.5 2.2h2" stroke="#f0f0f0" stroke-width="0.8"/></svg>
<svg class="a" style="left:269px;top:79px;" width="16" height="16" viewBox="0 0 16 16"><path d="M2 15v-3c1-3 3-5 6-6" fill="none" stroke="#a0a0a0" stroke-dasharray="2 1"/><path d="M9 1h7v2l-2 2v5h-3v-5l-2-2z" fill="#a0a0a0"/><path d="M12.5 2.2h2" stroke="#f0f0f0" stroke-width="0.8"/></svg>
<svg class="a" style="left:292px;top:79px;" width="16" height="16" viewBox="0 0 16 16"><rect x="1" y="13" width="2" height="2" fill="#a0a0a0"/><rect x="4" y="10" width="2" height="2" fill="#a0a0a0"/><rect x="7" y="7" width="2" height="2" fill="#a0a0a0"/><path d="M9 1h7v2l-2 2v5h-3v-5l-2-2z" fill="#a0a0a0"/><path d="M12.5 2.2h2" stroke="#f0f0f0" stroke-width="0.8"/></svg>
<svg class="a" style="left:315px;top:79px;" width="16" height="16" viewBox="0 0 16 16"><path d="M1.5 4.5h6v7h-6zM4 11v4M1 15h6" fill="none" stroke="#a0a0a0"/><path d="M7 11l4-6 2 1-4 6z" fill="#a0a0a0"/><path d="M9 1h7v2l-2 2v5h-3v-5l-2-2z" fill="#a0a0a0"/><path d="M12.5 2.2h2" stroke="#f0f0f0" stroke-width="0.8"/></svg>
<svg class="a" style="left:338px;top:79px;" width="16" height="16" viewBox="0 0 16 16"><text x="1" y="15" font-size="7" fill="#a0a0a0" font-family="Liberation Sans">x=</text><path d="M7 1h7v2l-2 2v5h-3v-5l-2-2z" fill="#a0a0a0"/><path d="M10.5 2.2h2" stroke="#f0f0f0" stroke-width="0.8"/></svg>
<svg class="a" style="left:361px;top:79px;" width="16" height="16" viewBox="0 0 16 16"><path d="M3 3l3-2 3 1 3-1 2 2v9l-2 2-4 1-3-1v-3l-3-1 1-3z" fill="none" stroke="#a0a0a0" stroke-width="1.2"/><path d="M7 2v12M10 2v11" stroke="#a0a0a0" stroke-width="1"/><path d="M9 1h7v2l-2 2v5h-3v-5l-2-2z" fill="#a0a0a0"/><path d="M12.5 2.2h2" stroke="#f0f0f0" stroke-width="0.8"/></svg>
<svg class="a" style="left:384px;top:79px;" width="16" height="16" viewBox="0 0 16 16"><path d="M1 11l4-2h9l-4 2zM1 14l4-2h9l-4 2zM1 8l4-2h9l-4 2z" fill="none" stroke="#a0a0a0"/><path d="M9 1h7v2l-2 2v5h-3v-5l-2-2z" fill="#a0a0a0"/><path d="M12.5 2.2h2" stroke="#f0f0f0" stroke-width="0.8"/></svg>
<svg class="a" style="left:428px;top:79px;" width="16" height="16" viewBox="0 0 16 16"><circle cx="8" cy="7" r="4.5" fill="#a0a0a0"/><rect x="6" y="11" width="4" height="4" fill="#a0a0a0"/><path d="M1 1l3 3M15 1l-3 3M1 13l3-3M15 13l-3-3M0 7h2M14 7h2M8 0v1" stroke="#a0a0a0"/></svg>
<svg class="a" style="left:450px;top:79px;" width="16" height="16" viewBox="0 0 16 16"><rect x="1" y="1" width="5" height="14" fill="#a0a0a0"/><circle cx="11.5" cy="8.5" r="3.5" fill="#a0a0a0"/><rect x="10" y="12" width="3" height="3" fill="#a0a0a0"/></svg>
<svg class="a" style="left:474px;top:79px;" width="16" height="16" viewBox="0 0 16 16"><path d="M1 1l5 5M6 1l-5 5" stroke="#a0a0a0"/><circle cx="11.5" cy="8.5" r="3.5" fill="#a0a0a0"/><rect x="10" y="12" width="3" height="3" fill="#a0a0a0"/></svg>
<svg class="a" style="left:497px;top:79px;" width="16" height="16" viewBox="0 0 16 16"><path d="M3 3l3-2 3 1 3-1 2 2v9l-2 2-4 1-3-1v-3l-3-1 1-3z" fill="none" stroke="#a0a0a0" stroke-width="1.2"/><path d="M7 2v12M10 2v11" stroke="#a0a0a0" stroke-width="1"/><circle cx="12.5" cy="8.5" r="3.5" fill="#a0a0a0"/><rect x="11" y="12" width="3" height="3" fill="#a0a0a0"/></svg>
<svg class="a" style="left:519px;top:79px;" width="16" height="16" viewBox="0 0 16 16"><rect x="1" y="1" width="6" height="2" fill="#a0a0a0"/><rect x="1" y="4" width="6" height="2" fill="#a0a0a0"/><rect x="1" y="7" width="6" height="2" fill="#a0a0a0"/><rect x="1" y="10" width="6" height="2" fill="#a0a0a0"/><circle cx="11.5" cy="8.5" r="3.5" fill="#a0a0a0"/><rect x="10" y="12" width="3" height="3" fill="#a0a0a0"/></svg>
<svg class="a" style="left:542px;top:79px;" width="16" height="16" viewBox="0 0 16 16"><rect x="1" y="3" width="6" height="2" fill="#a0a0a0"/><rect x="1" y="6" width="6" height="2" fill="#a0a0a0"/><rect x="1" y="9" width="6" height="2" fill="#a0a0a0"/><rect x="1" y="12" width="6" height="2" fill="#a0a0a0"/><circle cx="11.5" cy="8.5" r="3.5" fill="#a0a0a0"/><rect x="10" y="12" width="3" height="3" fill="#a0a0a0"/></svg>
<svg class="a" style="left:575px;top:79px;" width="16" height="16" viewBox="0 0 16 16"><circle cx="8" cy="7" r="5" fill="#a0a0a0"/><rect x="6" y="11" width="4" height="4" fill="#a0a0a0"/><path d="M5 5l4-2" stroke="#e0e0e0"/></svg>
<svg class="a" style="left:597px;top:79px;" width="16" height="16" viewBox="0 0 16 16"><rect x="1" y="1" width="5" height="14" fill="#a0a0a0"/><circle cx="11.5" cy="8.5" r="3.5" fill="#a0a0a0"/><rect x="10" y="12" width="3" height="3" fill="#a0a0a0"/></svg>
<svg class="a" style="left:620px;top:79px;" width="16" height="16" viewBox="0 0 16 16"><path d="M1 1l5 5M6 1l-5 5" stroke="#a0a0a0"/><circle cx="11.5" cy="8.5" r="3.5" fill="#a0a0a0"/><rect x="10" y="12" width="3" height="3" fill="#a0a0a0"/></svg>
<svg class="a" style="left:644px;top:79px;" width="16" height="16" viewBox="0 0 16 16"><path d="M3 3l3-2 3 1 3-1 2 2v9l-2 2-4 1-3-1v-3l-3-1 1-3z" fill="none" stroke="#a0a0a0" stroke-width="1.2"/><path d="M7 2v12M10 2v11" stroke="#a0a0a0" stroke-width="1"/><circle cx="12.5" cy="8.5" r="3.5" fill="#a0a0a0"/><rect x="11" y="12" width="3" height="3" fill="#a0a0a0"/></svg>
<svg class="a" style="left:667px;top:79px;" width="16" height="16" viewBox="0 0 16 16"><rect x="1" y="1" width="6" height="2" fill="#a0a0a0"/><rect x="1" y="4" width="6" height="2" fill="#a0a0a0"/><rect x="1" y="7" width="6" height="2" fill="#a0a0a0"/><rect x="1" y="10" width="6" height="2" fill="#a0a0a0"/><circle cx="11.5" cy="8.5" r="3.5" fill="#a0a0a0"/><rect x="10" y="12" width="3" height="3" fill="#a0a0a0"/></svg>
<svg class="a" style="left:689px;top:79px;" width="16" height="16" viewBox="0 0 16 16"><rect x="1" y="3" width="6" height="2" fill="#a0a0a0"/><rect x="1" y="6" width="6" height="2" fill="#a0a0a0"/><rect x="1" y="9" width="6" height="2" fill="#a0a0a0"/><rect x="1" y="12" width="6" height="2" fill="#a0a0a0"/><circle cx="11.5" cy="8.5" r="3.5" fill="#a0a0a0"/><rect x="10" y="12" width="3" height="3" fill="#a0a0a0"/></svg>
<svg class="a" style="left:712px;top:79px;" width="16" height="16" viewBox="0 0 16 16"><path d="M1 4.5h6M1 7.5h6M1 10.5h6" stroke="#a0a0a0"/><circle cx="11.5" cy="8.5" r="3.5" fill="#a0a0a0"/><rect x="10" y="12" width="3" height="3" fill="#a0a0a0"/></svg>
<svg class="a" style="left:756px;top:79px;" width="16" height="16" viewBox="0 0 16 16"><path d="M1 8l4-5h6l4 5-4 5h-6z" fill="#00ffff" stroke="#0000e0" stroke-width="1.2"/><path d="M8 3v10M5 3l3 3 3-3" fill="none" stroke="#0000c0"/></svg>
<svg class="a" style="left:779px;top:79px;" width="16" height="16" viewBox="0 0 16 16"><path d="M1 10l3-3h8l3 3-3 3h-8z" fill="#00ffff" stroke="#0000e0" stroke-width="1.2"/><path d="M6 7v-3h4v3" fill="#00ffff" stroke="#0000e0"/><path d="M5 10h6" stroke="#0000c0"/></svg>
<svg class="a" style="left:802px;top:79px;" width="16" height="16" viewBox="0 0 16 16"><path d="M1 8h14l-1 4h-12z" fill="#00ffff" stroke="#000"/><path d="M6 8v-2h4v2" fill="#00ffff" stroke="#0000e0"/></svg>
<svg class="a" style="left:825px;top:79px;" width="16" height="16" viewBox="0 0 16 16"><path d="M1 9h14l-2 3h-12z" fill="#00ffff" stroke="#000"/><path d="M7 9v-2h4v2" fill="#00ffff" stroke="#0000e0"/></svg>
<svg class="a" style="left:848px;top:79px;" width="16" height="16" viewBox="0 0 16 16"><path d="M1 8c0-3 3-4 7-4s7 2 7 4-3 4-7 4-7-1-7-4z" fill="#00ffff" stroke="#0000e0" stroke-width="1.2"/><path d="M8 6h2c1 0 1 4 0 4h-2z" fill="none" stroke="#000"/></svg>
<svg class="a" style="left:871px;top:79px;" width="16" height="16" viewBox="0 0 16 16"><path d="M1 8c1-2 4-3 7-3s6 1 7 3c-1 2-4 3-7 3s-6-1-7-3z" fill="#00ffff" stroke="#0000e0" stroke-width="1.2"/><path d="M1 8h14" stroke="#000"/></svg>
<svg class="a" style="left:901px;top:79px;" width="16" height="16" viewBox="0 0 16 16"><path d="M1 8l7-6 7 6h-2v7h-10v-7z" fill="#ff00ff" stroke="#000" stroke-width="1.2"/><rect x="11" y="1" width="2" height="5" fill="#c00000"/><rect x="4" y="9" width="3" height="3" fill="#0000c0"/></svg>
<svg class="a" style="left:946px;top:79px;" width="16" height="16" viewBox="0 0 16 16"><path d="M1 3l3-2 10 9-3 4z" fill="#a0e0ff" stroke="#000"/><ellipse cx="12.5" cy="12" rx="2.5" ry="2.8" fill="#fff" stroke="#000"/><path d="M10 1h5M11 0l-2 1 2 2" fill="none" stroke="#000"/></svg>
<svg class="a" style="left:977px;top:79px;" width="16" height="16" viewBox="0 0 16 16"><circle cx="6.5" cy="6.5" r="5" fill="#fff" stroke="#000" stroke-width="1.4"/><rect x="4" y="4" width="5" height="5" fill="#808080" stroke="#000" stroke-width=".8"/><path d="M10 10l4.5 4.5" stroke="#008080" stroke-width="2.2"/></svg>
<svg class="a" style="left:1000px;top:79px;" width="16" height="16" viewBox="0 0 16 16"><circle cx="6.5" cy="6.5" r="5" fill="#fff" stroke="#000" stroke-width="1.4"/><path d="M3.5 6.5h6M6.5 3.5v6" stroke="#000" stroke-width="1.8"/><path d="M10 10l4.5 4.5" stroke="#008080" stroke-width="2.2"/></svg>
<svg class="a" style="left:1023px;top:79px;" width="16" height="16" viewBox="0 0 16 16"><circle cx="6.5" cy="6.5" r="5" fill="#fff" stroke="#000" stroke-width="1.4"/><path d="M10 10l4.5 4.5" stroke="#008080" stroke-width="2.2"/><path d="M14 1v9M12.5 2.5l1.5-1.5 1.5 1.5M12.5 8.5l1.5 1.5 1.5-1.5" fill="none" stroke="#000"/></svg>
<svg class="a" style="left:1046px;top:79px;" width="16" height="16" viewBox="0 0 16 16"><circle cx="6.5" cy="6.5" r="5" fill="#fff" stroke="#000" stroke-width="1.4"/><path d="M3.5 5h6M3.5 8h6" stroke="#000" stroke-width="1.5"/><path d="M10 10l4.5 4.5" stroke="#008080" stroke-width="2.2"/></svg>
<svg class="a" style="left:1069px;top:79px;" width="16" height="16" viewBox="0 0 16 16"><path d="M3 9a5 5 0 0 1 8-5M13 7a5 5 0 0 1-8 5" fill="none" stroke="#000" stroke-width="1.5"/><path d="M10 1l4 3-4 2zM6 15l-4-3 4-2z" fill="#000"/></svg>
<svg class="a" style="left:1092px;top:79px;" width="16" height="16" viewBox="0 0 16 16"><path d="M8 1l3 3h-2v3h3v-2l3 3-3 3v-2h-3v3h2l-3 3-3-3h2v-3h-3v2l-3-3 3-3v2h3v-3h-2z" fill="#000"/></svg>
<svg class="a" style="left:1137px;top:79px;" width="16" height="16" viewBox="0 0 16 16"><path d="M1.5 5.5h9v9h-9zM5.5 1.5h9v9h-9zM1.5 5.5l4-4M10.5 5.5l4-4M1.5 14.5l4-4M10.5 14.5l4-4" fill="none" stroke="#a0a0a0"/></svg>
<svg class="a" style="left:1159px;top:79px;" width="16" height="16" viewBox="0 0 16 16"><path d="M1 4l3-3h8l3 3v11h-11l-3-3z" fill="#a0a0a0"/><rect x="6" y="6" width="1" height="1" fill="#fff"/><rect x="6" y="8" width="1" height="1" fill="#fff"/><rect x="6" y="10" width="1" height="1" fill="#fff"/><rect x="6" y="12" width="1" height="1" fill="#fff"/><rect x="8" y="6" width="1" height="1" fill="#fff"/><rect x="8" y="8" width="1" height="1" fill="#fff"/><rect x="8" y="10" width="1" height="1" fill="#fff"/><rect x="8" y="12" width="1" height="1" fill="#fff"/><rect x="10" y="6" width="1" height="1" fill="#fff"/><rect x="10" y="8" width="1" height="1" fill="#fff"/><rect x="10" y="10" width="1" height="1" fill="#fff"/><rect x="10" y="12" width="1" height="1" fill="#fff"/><rect x="12" y="6" width="1" height="1" fill="#fff"/><rect x="12" y="8" width="1" height="1" fill="#fff"/><rect x="12" y="10" width="1" height="1" fill="#fff"/><rect x="12" y="12" width="1" height="1" fill="#fff"/></svg>
<svg class="a" style="left:1182px;top:79px;" width="16" height="16" viewBox="0 0 16 16"><path d="M1 4l3-3h8l3 3v11h-11l-3-3z" fill="#00e5e5"/><path d="M1 4h11v11M12 4l3-3" fill="none" stroke="#008080"/><path d="M1 4l3-3h8l3 3-3 0h-8z" fill="#40ffff"/><rect x="12" y="4" width="3" height="11" fill="#008080" fill-opacity=".5"/></svg>
<svg class="a" style="left:1205px;top:79px;" width="16" height="16" viewBox="0 0 16 16"><path d="M1.5 3.5l2-2h8l3 3v10h-10l-3-3z" fill="#40ffff" stroke="#000" stroke-width="1.2"/><rect x="4.5" y="5.5" width="9" height="9" fill="#80f0f0" stroke="#000" stroke-width="1.2"/><path d="M1.5 3.5l3 2" stroke="#000"/></svg>
<svg class="a" style="left:1228px;top:79px;" width="16" height="16" viewBox="0 0 16 16"><path d="M1 5l5-4 9 3-3 8-4 3-3-2z" fill="#a0a0a0"/></svg>
<svg class="a" style="left:1251px;top:79px;" width="16" height="16" viewBox="0 0 16 16"><rect x="0.5" y="2.5" width="14" height="7" fill="none" stroke="#a0a0a0"/><path d="M2 9c2-4 3-5 5-3s4 0 7 0" fill="none" stroke="#a0a0a0"/><path d="M16 11.5v4.5h-4.5z" fill="#a0a0a0"/></svg>
<div class="a" style="left:0px;top:103px;width:238px;height:929px;background:#fff;"></div>
<div class="a" style="left:3px;top:105px;width:217px;height:13px;background:linear-gradient(90deg,#c0cfdd,#cad9e7 50%,#d5e2ef);"></div>
<div class="a" style="left:5px;top:105.69px;font-size:11px;line-height:11px;color:#34425a;white-space:nowrap;letter-spacing:-0.2px">Entities</div>
<svg class="a" style="left:225px;top:108px;" width="7" height="7" viewBox="0 0 7 7"><path d="M1 1l5 5M6 1l-5 5" stroke="#000" stroke-width="1.9"/></svg>
<div class="a" style="left:3px;top:120px;width:231px;height:387px;background:#f0f0f0;border-top:1px solid #6b6b6b;border-left:2px solid #6b6b6b;border-right:1px solid #e3e3e3;border-bottom:1px solid #fff;box-shadow:inset 1px 1px 0 #fff"></div>
<div class="a" style="left:10px;top:124px;width:53px;height:21px;background:#fff;border:1px solid #8b939c;border-bottom:none"></div>
<div class="a" style="left:62px;top:126px;width:46px;height:19px;background:linear-gradient(#f3f3f3,#e6e6e6 50%,#d6d6d6);border:1px solid #8b939c;border-bottom:none"></div>
<div class="a" style="left:19px;top:128.69px;font-size:11px;line-height:11px;color:#000;white-space:nowrap;letter-spacing:-0.35px">Parents</div>
<div class="a" style="left:66px;top:130.69px;font-size:11px;line-height:11px;color:#000;white-space:nowrap;letter-spacing:-0.35px">Children</div>
<div class="a" style="left:10px;top:145px;width:222px;height:361px;background:#fff;"></div>
<div class="a" style="left:21px;top:154px;width:1px;height:304px;background:repeating-linear-gradient(#a0a0a0 0 1px,transparent 1px 2px)"></div>
<div class="a" style="left:23px;top:153px;width:9px;height:1px;background:repeating-linear-gradient(90deg,#a0a0a0 0 1px,transparent 1px 2px)"></div>
<svg class="a" style="left:32px;top:145px;" width="16" height="16" viewBox="0 0 16 16"><path d="M1 8.5h4" stroke="#000" stroke-width="2"/><path d="M4.5 6.5c0-2 1.5-3.5 4-3.5h2.5v11h-2.5c-2.5 0-4-1.5-4-3.5z" fill="#ff0" stroke="#000" stroke-width="1.2"/><path d="M11 5.5h4M11 11.5h4" stroke="#000" stroke-width="2"/></svg>
<div class="a" style="left:53px;top:146.69px;font-size:11px;line-height:11px;color:#000;white-space:nowrap;letter-spacing:-0.28px;word-spacing:1px">Components</div>
<div class="a" style="left:17px;top:161px;width:9px;height:16px;background:#fff;"></div>
<svg class="a" style="left:19px;top:165px;" width="7" height="9" viewBox="0 0 7 9"><path d="M1.5 0.5l4 4-4 4z" fill="#fff" stroke="#a6a6a6"/></svg>
<div class="a" style="left:29px;top:169px;width:3px;height:1px;background:repeating-linear-gradient(90deg,#a0a0a0 0 1px,transparent 1px 2px)"></div>
<svg class="a" style="left:32px;top:161px;" width="16" height="16" viewBox="0 0 16 16"><path d="M1.5 5.5C3 3 5 1.5 8 1.5S13 3 14.5 5.5C13 9 10 12 6.5 15C4 13.5 2.5 9 1.5 5.5Z" fill="#ff0" stroke="#000" stroke-width="1.3"/><path d="M5 2.5C6 6 6.5 10 6.5 14M9.5 2C10 5 10 8 9 11.5M2.5 8.5C6 8 10 8 13 7.5M3 5C7 5 10 4.5 13 4" fill="none" stroke="#808000" stroke-width=".8"/></svg>
<div class="a" style="left:53px;top:162.69px;font-size:11px;line-height:11px;color:#000;white-space:nowrap;letter-spacing:-0.28px;word-spacing:1px">Surfaces</div>
<div class="a" style="left:17px;top:177px;width:9px;height:16px;background:#fff;"></div>
<svg class="a" style="left:19px;top:181px;" width="7" height="9" viewBox="0 0 7 9"><path d="M1.5 0.5l4 4-4 4z" fill="#fff" stroke="#a6a6a6"/></svg>
<div class="a" style="left:29px;top:185px;width:3px;height:1px;background:repeating-linear-gradient(90deg,#a0a0a0 0 1px,transparent 1px 2px)"></div>
<svg class="a" style="left:32px;top:177px;" width="16" height="16" viewBox="0 0 16 16"><rect x="1" y="1" width="14" height="14" fill="url(#dy)"/><path d="M2 14c0-4 2-6 4-5s2 3 4 1 3-5 4-8" fill="none" stroke="#000" stroke-width="1.4"/></svg>
<div class="a" style="left:53px;top:178.69px;font-size:11px;line-height:11px;color:#000;white-space:nowrap;letter-spacing:-0.28px;word-spacing:1px">Curves</div>
<div class="a" style="left:17px;top:193px;width:9px;height:16px;background:#fff;"></div>
<svg class="a" style="left:19px;top:197px;" width="7" height="9" viewBox="0 0 7 9"><path d="M1.5 0.5l4 4-4 4z" fill="#fff" stroke="#a6a6a6"/></svg>
<div class="a" style="left:29px;top:201px;width:3px;height:1px;background:repeating-linear-gradient(90deg,#a0a0a0 0 1px,transparent 1px 2px)"></div>
<svg class="a" style="left:32px;top:193px;" width="16" height="16" viewBox="0 0 16 16"><rect x="1" y="1" width="14" height="14" fill="url(#dy)"/><path d="M3 3l9 9M12 3l-9 9" stroke="#000" stroke-width="1.1"/></svg>
<div class="a" style="left:53px;top:194.69px;font-size:11px;line-height:11px;color:#000;white-space:nowrap;letter-spacing:-0.28px;word-spacing:1px">Points</div>
<div class="a" style="left:23px;top:217px;width:9px;height:1px;background:repeating-linear-gradient(90deg,#a0a0a0 0 1px,transparent 1px 2px)"></div>
<svg class="a" style="left:32px;top:209px;" width="16" height="16" viewBox="0 0 16 16"><path d="M8 1.5l6.5 6.5-6.5 6.5-6.5-6.5z" fill="url(#dy)" stroke="#c0c0c0"/><path d="M1 0l3 3M6 5l2 2M10 9l4 4" stroke="#000" stroke-width="1.2"/></svg>
<div class="a" style="left:53px;top:210.69px;font-size:11px;line-height:11px;color:#000;white-space:nowrap;letter-spacing:-0.28px;word-spacing:1px">Planes</div>
<div class="a" style="left:23px;top:233px;width:9px;height:1px;background:repeating-linear-gradient(90deg,#a0a0a0 0 1px,transparent 1px 2px)"></div>
<svg class="a" style="left:32px;top:225px;" width="16" height="16" viewBox="0 0 16 16"><rect x="1" y="1" width="14" height="14" fill="url(#dy)"/><path d="M3.5 2v10.5h10M3.5 12.5l7-7" fill="none" stroke="#000" stroke-width="1.2"/></svg>
<div class="a" style="left:53px;top:226.69px;font-size:11px;line-height:11px;color:#000;white-space:nowrap;letter-spacing:-0.28px;word-spacing:1px">Frames</div>
<div class="a" style="left:23px;top:249px;width:9px;height:1px;background:repeating-linear-gradient(90deg,#a0a0a0 0 1px,transparent 1px 2px)"></div>
<svg class="a" style="left:32px;top:241px;" width="16" height="16" viewBox="0 0 16 16"><rect x="1.5" y="1.5" width="13" height="13" fill="#ff0" stroke="#000" stroke-width="1.2"/><path d="M2 2l12 12M14 2l-12 12M8 2v12M2 8h12" stroke="#909090" stroke-width=".8"/></svg>
<div class="a" style="left:53px;top:242.69px;font-size:11px;line-height:11px;color:#000;white-space:nowrap;letter-spacing:-0.28px;word-spacing:1px">Triangle Meshes</div>
<div class="a" style="left:23px;top:265px;width:9px;height:1px;background:repeating-linear-gradient(90deg,#a0a0a0 0 1px,transparent 1px 2px)"></div>
<svg class="a" style="left:32px;top:257px;" width="16" height="16" viewBox="0 0 16 16"><rect x="1" y="9" width="14" height="6" fill="url(#dg)"/><path d="M1.5 2.5h4l1 1h4v8h-9z" fill="#ff0" stroke="#808000" stroke-width=".5"/><path d="M7 12l6-10 2 1-6 10z" fill="#ff40ff" stroke="#000" stroke-width=".8"/><path d="M1 14.5h7" stroke="#000"/></svg>
<div class="a" style="left:53px;top:258.69px;font-size:11px;line-height:11px;color:#000;white-space:nowrap;letter-spacing:-0.28px;word-spacing:1px">Wireframes</div>
<div class="a" style="left:17px;top:273px;width:9px;height:16px;background:#fff;"></div>
<svg class="a" style="left:19px;top:277px;" width="7" height="9" viewBox="0 0 7 9"><path d="M1.5 0.5l4 4-4 4z" fill="#fff" stroke="#a6a6a6"/></svg>
<div class="a" style="left:29px;top:281px;width:3px;height:1px;background:repeating-linear-gradient(90deg,#a0a0a0 0 1px,transparent 1px 2px)"></div>
<svg class="a" style="left:32px;top:273px;" width="16" height="16" viewBox="0 0 16 16"><path d="M2 4l3-2 4 0 4-1 2 3v8l-2 2-4 1-3-1v-3l-3-1 0-3z" fill="#ff0" stroke="#000" stroke-width="1.3"/><path d="M6 3v11M9.5 2v12M12.5 2v11" stroke="#ff00ff" stroke-width="1.1"/></svg>
<div class="a" style="left:53px;top:274.69px;font-size:11px;line-height:11px;color:#000;white-space:nowrap;letter-spacing:-0.28px;word-spacing:1px">Contours</div>
<div class="a" style="left:23px;top:297px;width:9px;height:1px;background:repeating-linear-gradient(90deg,#a0a0a0 0 1px,transparent 1px 2px)"></div>
<svg class="a" style="left:32px;top:289px;" width="16" height="16" viewBox="0 0 16 16"><path d="M1.5 5.5l4-4h9l-4 4zM10.5 5.5l4-4v9l-4 4z" fill="#ff0" stroke="#000" stroke-width="1.2"/><path d="M1.5 5.5h9v9h-9z" fill="#ff0" stroke="#000" stroke-width="1.2"/></svg>
<div class="a" style="left:53px;top:290.69px;font-size:11px;line-height:11px;color:#000;white-space:nowrap;letter-spacing:-0.28px;word-spacing:1px">Solids</div>
<div class="a" style="left:23px;top:313px;width:9px;height:1px;background:repeating-linear-gradient(90deg,#a0a0a0 0 1px,transparent 1px 2px)"></div>
<svg class="a" style="left:32px;top:305px;" width="16" height="16" viewBox="0 0 16 16"><g fill="#ff0" stroke="#000" stroke-width="1.3"><ellipse cx="4.5" cy="4.5" rx="4" ry="2.3" transform="rotate(45 4.5 4.5)"/><ellipse cx="4.5" cy="11.5" rx="4" ry="2.3" transform="rotate(-45 4.5 11.5)"/><ellipse cx="11.5" cy="12" rx="3.8" ry="2.4" transform="rotate(20 11.5 12)"/><circle cx="11" cy="4.8" r="3.9"/></g><path d="M9.5 1.5v6.5M12 1.5v6.5M7.5 3.8h7M7.5 6.2h7" stroke="#909090" stroke-width="1"/><path d="M3 3l3 3M3 13l3-3M10 11l4 1.5" stroke="#a0a000" stroke-width=".8"/></svg>
<div class="a" style="left:53px;top:306.69px;font-size:11px;line-height:11px;color:#000;white-space:nowrap;letter-spacing:-0.28px;word-spacing:1px">Composite Surfaces</div>
<div class="a" style="left:23px;top:329px;width:9px;height:1px;background:repeating-linear-gradient(90deg,#a0a0a0 0 1px,transparent 1px 2px)"></div>
<svg class="a" style="left:32px;top:321px;" width="16" height="16" viewBox="0 0 16 16"><rect x="1" y="1" width="14" height="14" fill="url(#dy)"/><path d="M2.5 13.5v-4l2-2 2-3 2-1h5l1.5 1" fill="none" stroke="#000" stroke-width="1"/><path d="M2.5 10l2-2.5M4.5 3l1.5 2.5M15 2.5l-2 3" stroke="#f00" stroke-width="1.4"/><circle cx="2.8" cy="13" r="1.8" fill="#f00"/></svg>
<div class="a" style="left:53px;top:322.69px;font-size:11px;line-height:11px;color:#000;white-space:nowrap;letter-spacing:-0.28px;word-spacing:1px">Relabels</div>
<div class="a" style="left:23px;top:345px;width:9px;height:1px;background:repeating-linear-gradient(90deg,#a0a0a0 0 1px,transparent 1px 2px)"></div>
<svg class="a" style="left:32px;top:337px;" width="16" height="16" viewBox="0 0 16 16"><rect x="1" y="1" width="14" height="14" fill="url(#dy)"/><rect x="1.5" y="5.5" width="13" height="7" fill="url(#dy)" stroke="#000" stroke-width="1.3"/><path d="M2.5 11.5c1.5-3 3-4 5-2s3-2 4.5-2 2 2 2.5 4" fill="none" stroke="#0000ff" stroke-width="1.2" stroke-dasharray="1.5 1"/></svg>
<div class="a" style="left:53px;top:338.69px;font-size:11px;line-height:11px;color:#000;white-space:nowrap;letter-spacing:-0.28px;word-spacing:1px">Graphs</div>
<div class="a" style="left:23px;top:361px;width:9px;height:1px;background:repeating-linear-gradient(90deg,#a0a0a0 0 1px,transparent 1px 2px)"></div>
<svg class="a" style="left:32px;top:353px;" width="16" height="16" viewBox="0 0 16 16"><rect x="1" y="1" width="14" height="14" fill="url(#dy)"/><rect x="2" y="8" width="2" height="2" fill="#000"/><rect x="5" y="5" width="2" height="2" fill="#000"/><rect x="8" y="2" width="2" height="2" fill="#000"/><rect x="11" y="2" width="2" height="2" fill="#000"/><path d="M12 6v5M11 11h2" stroke="#000"/><ellipse cx="3" cy="13" rx="1.3" ry="1.6" fill="none" stroke="#000"/></svg>
<div class="a" style="left:53px;top:354.69px;font-size:11px;line-height:11px;color:#000;white-space:nowrap;letter-spacing:-0.28px;word-spacing:1px">Knotlists</div>
<div class="a" style="left:23px;top:377px;width:9px;height:1px;background:repeating-linear-gradient(90deg,#a0a0a0 0 1px,transparent 1px 2px)"></div>
<svg class="a" style="left:32px;top:369px;" width="16" height="16" viewBox="0 0 16 16"><rect x="1" y="1" width="14" height="14" fill="url(#dy)"/><path d="M2 5l4 5M6 5l-4 5" stroke="#000" stroke-width="1.4"/><path d="M8 6h6M8 9h6" stroke="#000" stroke-width="1.4"/></svg>
<div class="a" style="left:53px;top:370.69px;font-size:11px;line-height:11px;color:#000;white-space:nowrap;letter-spacing:-0.28px;word-spacing:1px">Variables &amp; Formulas</div>
<div class="a" style="left:23px;top:393px;width:9px;height:1px;background:repeating-linear-gradient(90deg,#a0a0a0 0 1px,transparent 1px 2px)"></div>
<svg class="a" style="left:32px;top:385px;" width="16" height="16" viewBox="0 0 16 16"><rect x="1" y="1" width="14" height="14" fill="url(#dy)"/><path d="M1 15l6-13h2l6 13h-3l-1.5-3.5h-5l-1.5 3.5z M6.5 9h3l-1.5-4z" fill="#000" fill-rule="evenodd"/></svg>
<div class="a" style="left:53px;top:386.69px;font-size:11px;line-height:11px;color:#000;white-space:nowrap;letter-spacing:-0.28px;word-spacing:1px">Text Labels</div>
<div class="a" style="left:23px;top:409px;width:9px;height:1px;background:repeating-linear-gradient(90deg,#a0a0a0 0 1px,transparent 1px 2px)"></div>
<svg class="a" style="left:32px;top:401px;" width="16" height="16" viewBox="0 0 16 16"><rect x="1" y="1" width="14" height="14" fill="url(#dy)"/><path d="M3 6h11l-1 1.5h-11zM2 10h11l-1 1.5h-11z" fill="#000"/></svg>
<div class="a" style="left:53px;top:402.69px;font-size:11px;line-height:11px;color:#000;white-space:nowrap;letter-spacing:-0.28px;word-spacing:1px">Solve Sets</div>
<div class="a" style="left:23px;top:425px;width:9px;height:1px;background:repeating-linear-gradient(90deg,#a0a0a0 0 1px,transparent 1px 2px)"></div>
<svg class="a" style="left:32px;top:417px;" width="16" height="16" viewBox="0 0 16 16"><rect x="1" y="1" width="14" height="14" fill="url(#dy)"/><rect x="1.5" y="1.5" width="13" height="13" fill="#fff" stroke="#000" stroke-width="1.2"/><path d="M4 4.5h8M4 6.5h8M4 8.5h8M4 10.5h8" stroke="#000"/></svg>
<div class="a" style="left:53px;top:418.69px;font-size:11px;line-height:11px;color:#000;white-space:nowrap;letter-spacing:-0.28px;word-spacing:1px">Entity Lists</div>
<div class="a" style="left:17px;top:433px;width:9px;height:16px;background:#fff;"></div>
<svg class="a" style="left:19px;top:437px;" width="7" height="9" viewBox="0 0 7 9"><path d="M1.5 0.5l4 4-4 4z" fill="#fff" stroke="#a6a6a6"/></svg>
<div class="a" style="left:29px;top:441px;width:3px;height:1px;background:repeating-linear-gradient(90deg,#a0a0a0 0 1px,transparent 1px 2px)"></div>
<svg class="a" style="left:32px;top:433px;" width="16" height="16" viewBox="0 0 16 16"><path d="M8 1v14M2 4.5l12 7M14 4.5l-12 7" stroke="#000" stroke-width="3.2"/><path d="M8 2v11M3 5l10 6M13 5l-10 6" stroke="#ff0" stroke-width="2"/><circle cx="8" cy="8" r="3.2" fill="#ff0"/></svg>
<div class="a" style="left:53px;top:434.69px;font-size:11px;line-height:11px;color:#000;white-space:nowrap;letter-spacing:-0.28px;word-spacing:1px">System</div>
<div class="a" style="left:23px;top:457px;width:9px;height:1px;background:repeating-linear-gradient(90deg,#a0a0a0 0 1px,transparent 1px 2px)"></div>
<svg class="a" style="left:32px;top:449px;" width="16" height="16" viewBox="0 0 16 16"><path d="M2.5 2v13h3M2.5 5h3M5.5 5v7h2M5.5 8h3M8 8h4" fill="none" stroke="#000" stroke-width="1.1"/><rect x="1" y="0" width="3" height="3" fill="#008000"/><rect x="4" y="3" width="3" height="3" fill="#008000"/><rect x="7" y="6.5" width="3" height="3" fill="#008000"/><rect x="12" y="6.5" width="3" height="3" fill="#f00"/><rect x="7" y="10" width="3" height="3" fill="#f00"/><rect x="4" y="13" width="3" height="3" fill="#008000"/></svg>
<div class="a" style="left:53px;top:450.69px;font-size:11px;line-height:11px;color:#000;white-space:nowrap;letter-spacing:-0.28px;word-spacing:1px">No Dependents</div>
<div class="a" style="left:10px;top:144px;width:222px;height:1px;background:#fff;"></div>
<div class="a" style="left:0px;top:511px;width:238px;height:1px;background:#a0a0a0;"></div>
<div class="a" style="left:3px;top:514px;width:217px;height:13px;background:linear-gradient(90deg,#c0cfdd,#cad9e7 50%,#d5e2ef);"></div>
<div class="a" style="left:5px;top:514.69px;font-size:11px;line-height:11px;color:#34425a;white-space:nowrap;letter-spacing:-0.2px">Properties</div>
<svg class="a" style="left:225px;top:517px;" width="7" height="7" viewBox="0 0 7 7"><path d="M1 1l5 5M6 1l-5 5" stroke="#000" stroke-width="1.9"/></svg>
<div class="a" style="left:3px;top:529px;width:231px;height:319px;background:#f0f0f0;border-top:1px solid #6b6b6b;border-left:2px solid #6b6b6b;border-right:1px solid #e3e3e3;border-bottom:1px solid #fff;box-shadow:inset 1px 1px 0 #fff"></div>
<div class="a" style="left:5px;top:531.00px;font-size:13px;line-height:13px;color:#000;white-space:nowrap;font-weight:bold;letter-spacing:0.1px">Multiple</div>
<div class="a" style="left:215px;top:531px;width:15px;height:15px;background:#f0f0f0;border-right:2px solid #6b6b6b;border-bottom:2px solid #6b6b6b;box-shadow:inset 1px 1px 0 #fff"></div>
<svg class="a" style="left:217px;top:531px;" width="11" height="13" viewBox="0 0 11 13"><g shape-rendering="crispEdges"><rect x="1" y="2" width="1" height="1" fill="#000"/><rect x="1" y="3" width="1" height="1" fill="#000"/><rect x="1" y="4" width="1" height="1" fill="#000"/><rect x="1" y="5" width="1" height="1" fill="#000"/><rect x="2" y="1" width="1" height="1" fill="#000"/><rect x="2" y="2" width="1" height="1" fill="#000"/><rect x="2" y="5" width="1" height="1" fill="#000"/><rect x="3" y="1" width="1" height="1" fill="#000"/><rect x="3" y="5" width="1" height="1" fill="#000"/><rect x="3" y="6" width="1" height="1" fill="#000"/><rect x="3" y="7" width="1" height="1" fill="#000"/><rect x="3" y="8" width="1" height="1" fill="#000"/><rect x="3" y="9" width="1" height="1" fill="#000"/><rect x="3" y="10" width="1" height="1" fill="#000"/><rect x="3" y="11" width="1" height="1" fill="#000"/><rect x="4" y="1" width="1" height="1" fill="#000"/><rect x="4" y="3" width="1" height="1" fill="#000"/><rect x="4" y="4" width="1" height="1" fill="#000"/><rect x="4" y="5" width="1" height="1" fill="#000"/><rect x="4" y="8" width="1" height="1" fill="#000"/><rect x="4" y="11" width="1" height="1" fill="#000"/><rect x="5" y="1" width="1" height="1" fill="#000"/><rect x="5" y="3" width="1" height="1" fill="#000"/><rect x="5" y="4" width="1" height="1" fill="#000"/><rect x="5" y="8" width="1" height="1" fill="#000"/><rect x="5" y="11" width="1" height="1" fill="#000"/><rect x="6" y="1" width="1" height="1" fill="#000"/><rect x="6" y="7" width="1" height="1" fill="#000"/><rect x="6" y="8" width="1" height="1" fill="#000"/><rect x="6" y="9" width="1" height="1" fill="#000"/><rect x="6" y="10" width="1" height="1" fill="#000"/><rect x="6" y="11" width="1" height="1" fill="#000"/><rect x="7" y="1" width="1" height="1" fill="#000"/><rect x="7" y="6" width="1" height="1" fill="#000"/><rect x="7" y="7" width="1" height="1" fill="#000"/><rect x="8" y="1" width="1" height="1" fill="#000"/><rect x="8" y="2" width="1" height="1" fill="#000"/><rect x="8" y="5" width="1" height="1" fill="#000"/><rect x="8" y="6" width="1" height="1" fill="#000"/><rect x="9" y="2" width="1" height="1" fill="#000"/><rect x="9" y="3" width="1" height="1" fill="#000"/><rect x="9" y="4" width="1" height="1" fill="#000"/><rect x="9" y="5" width="1" height="1" fill="#000"/><rect x="2" y="3" width="1" height="1" fill="#ff0"/><rect x="2" y="4" width="1" height="1" fill="#ff0"/><rect x="3" y="2" width="1" height="1" fill="#ff0"/><rect x="3" y="3" width="1" height="1" fill="#ff0"/><rect x="3" y="4" width="1" height="1" fill="#ff0"/><rect x="4" y="2" width="1" height="1" fill="#ff0"/><rect x="4" y="6" width="1" height="1" fill="#ff0"/><rect x="4" y="7" width="1" height="1" fill="#ff0"/><rect x="4" y="9" width="1" height="1" fill="#ff0"/><rect x="4" y="10" width="1" height="1" fill="#ff0"/><rect x="5" y="2" width="1" height="1" fill="#ff0"/><rect x="5" y="5" width="1" height="1" fill="#ff0"/><rect x="5" y="6" width="1" height="1" fill="#ff0"/><rect x="5" y="7" width="1" height="1" fill="#ff0"/><rect x="5" y="9" width="1" height="1" fill="#ff0"/><rect x="5" y="10" width="1" height="1" fill="#ff0"/><rect x="6" y="2" width="1" height="1" fill="#ff0"/><rect x="6" y="3" width="1" height="1" fill="#ff0"/><rect x="6" y="4" width="1" height="1" fill="#ff0"/><rect x="6" y="5" width="1" height="1" fill="#ff0"/><rect x="6" y="6" width="1" height="1" fill="#ff0"/><rect x="7" y="2" width="1" height="1" fill="#ff0"/><rect x="7" y="3" width="1" height="1" fill="#ff0"/><rect x="7" y="4" width="1" height="1" fill="#ff0"/><rect x="7" y="5" width="1" height="1" fill="#ff0"/><rect x="8" y="3" width="1" height="1" fill="#ff0"/><rect x="8" y="4" width="1" height="1" fill="#ff0"/></g></svg>
<div class="a" style="left:5px;top:546px;width:227px;height:1px;background:#a0a0a0;"></div>
<div class="a" style="left:5px;top:547px;width:227px;height:163px;background:#fff;"></div>
<div class="a" style="left:5px;top:547px;width:4px;height:163px;background:#f0f0f0;"></div>
<div class="a" style="left:106px;top:547px;width:1px;height:159px;background:#a0a0a0;"></div>
<div class="a" style="left:9px;top:561px;width:223px;height:1px;background:repeating-linear-gradient(90deg,#a0a0a0 0 1px,transparent 1px 2px)"></div>
<div class="a" style="left:14px;top:547.69px;font-size:11px;line-height:11px;color:#000;white-space:nowrap;letter-spacing:-0.35px">Color</div>
<div class="a" style="left:111px;top:547.69px;font-size:11px;line-height:11px;color:#000;white-space:nowrap;letter-spacing:-0.3px">(various)</div>
<div class="a" style="left:9px;top:577px;width:223px;height:1px;background:repeating-linear-gradient(90deg,#a0a0a0 0 1px,transparent 1px 2px)"></div>
<div class="a" style="left:14px;top:563.69px;font-size:11px;line-height:11px;color:#000;white-space:nowrap;letter-spacing:-0.35px">Visible</div>
<div class="a" style="left:111px;top:563px;width:13px;height:13px;border:1px solid #8e8f8f;background:linear-gradient(135deg,#dcdcdc,#f6f6f6)"></div>
<svg class="a" style="left:113px;top:565px;" width="10" height="10" viewBox="0 0 10 10"><path d="M1 5l3 3 5-7" fill="none" stroke="#3d55a0" stroke-width="1.8"/></svg>
<div class="a" style="left:127px;top:564.69px;font-size:11px;line-height:11px;color:#000;white-space:nowrap;letter-spacing:-0.3px">True</div>
<div class="a" style="left:9px;top:593px;width:223px;height:1px;background:repeating-linear-gradient(90deg,#a0a0a0 0 1px,transparent 1px 2px)"></div>
<div class="a" style="left:14px;top:579.69px;font-size:11px;line-height:11px;color:#000;white-space:nowrap;letter-spacing:-0.35px">Layer</div>
<svg class="a" style="left:110px;top:578px;" width="17" height="17" viewBox="0 0 17 17"><path d="M1 1l3 3M16 1l-3 3M1 13l3-3M16 13l-3-3M0 7h2M15 7h2" stroke="#ffff40" stroke-width="1.2"/><circle cx="8.5" cy="6.5" r="5" fill="#ff0" stroke="#000" stroke-width="1.1"/><path d="M6 9.5h5" stroke="#000"/><rect x="6" y="11" width="5" height="4.5" fill="#e0e0e0" stroke="#000" stroke-width=".9"/><path d="M6.5 13.2h4" stroke="#000" stroke-width=".8"/></svg>
<div class="a" style="left:129px;top:580.69px;font-size:11px;line-height:11px;color:#000;white-space:nowrap;letter-spacing:-0.3px">0</div>
<div class="a" style="left:9px;top:609px;width:223px;height:1px;background:repeating-linear-gradient(90deg,#a0a0a0 0 1px,transparent 1px 2px)"></div>
<div class="a" style="left:14px;top:595.69px;font-size:11px;line-height:11px;color:#000;white-space:nowrap;letter-spacing:-0.35px">Lock</div>
<div class="a" style="left:111px;top:595px;width:13px;height:13px;border:1px solid #8e8f8f;background:linear-gradient(135deg,#dcdcdc,#f6f6f6)"></div>
<div class="a" style="left:127px;top:596.69px;font-size:11px;line-height:11px;color:#000;white-space:nowrap;letter-spacing:-0.3px">False</div>
<div class="a" style="left:9px;top:625px;width:223px;height:1px;background:repeating-linear-gradient(90deg,#a0a0a0 0 1px,transparent 1px 2px)"></div>
<div class="a" style="left:14px;top:611.69px;font-size:11px;line-height:11px;color:#000;white-space:nowrap;letter-spacing:-0.35px">Divisions</div>
<div class="a" style="left:111px;top:611.69px;font-size:11px;line-height:11px;color:#000;white-space:nowrap;letter-spacing:-0.3px">8</div>
<div class="a" style="left:9px;top:641px;width:223px;height:1px;background:repeating-linear-gradient(90deg,#a0a0a0 0 1px,transparent 1px 2px)"></div>
<div class="a" style="left:14px;top:627.69px;font-size:11px;line-height:11px;color:#000;white-space:nowrap;letter-spacing:-0.35px">Subdivisions</div>
<div class="a" style="left:111px;top:627.69px;font-size:11px;line-height:11px;color:#000;white-space:nowrap;letter-spacing:-0.3px">4</div>
<div class="a" style="left:9px;top:657px;width:223px;height:1px;background:repeating-linear-gradient(90deg,#a0a0a0 0 1px,transparent 1px 2px)"></div>
<div class="a" style="left:14px;top:643.69px;font-size:11px;line-height:11px;color:#000;white-space:nowrap;letter-spacing:-0.35px">Show tickmarks</div>
<div class="a" style="left:111px;top:643px;width:13px;height:13px;border:1px solid #8e8f8f;background:linear-gradient(135deg,#dcdcdc,#f6f6f6)"></div>
<div class="a" style="left:127px;top:644.69px;font-size:11px;line-height:11px;color:#000;white-space:nowrap;letter-spacing:-0.3px">False</div>
<div class="a" style="left:9px;top:673px;width:223px;height:1px;background:repeating-linear-gradient(90deg,#a0a0a0 0 1px,transparent 1px 2px)"></div>
<div class="a" style="left:14px;top:659.69px;font-size:11px;line-height:11px;color:#000;white-space:nowrap;letter-spacing:-0.35px">Weight/unit length</div>
<div class="a" style="left:111px;top:659.69px;font-size:11px;line-height:11px;color:#000;white-space:nowrap;letter-spacing:-0.3px">0.000</div>
<div class="a" style="left:9px;top:689px;width:223px;height:1px;background:repeating-linear-gradient(90deg,#a0a0a0 0 1px,transparent 1px 2px)"></div>
<div class="a" style="left:14px;top:675.69px;font-size:11px;line-height:11px;color:#000;white-space:nowrap;letter-spacing:-0.35px">Symmetry exempt</div>
<div class="a" style="left:111px;top:675px;width:13px;height:13px;border:1px solid #8e8f8f;background:linear-gradient(135deg,#dcdcdc,#f6f6f6)"></div>
<div class="a" style="left:127px;top:676.69px;font-size:11px;line-height:11px;color:#000;white-space:nowrap;letter-spacing:-0.3px">False</div>
<div class="a" style="left:9px;top:705px;width:223px;height:1px;background:repeating-linear-gradient(90deg,#a0a0a0 0 1px,transparent 1px 2px)"></div>
<div class="a" style="left:14px;top:691.69px;font-size:11px;line-height:11px;color:#000;white-space:nowrap;letter-spacing:-0.35px">User data</div>
<div class="a" style="left:0px;top:852px;width:238px;height:1px;background:#a0a0a0;"></div>
<div class="a" style="left:3px;top:855px;width:217px;height:13px;background:linear-gradient(90deg,#c0cfdd,#cad9e7 50%,#d5e2ef);"></div>
<div class="a" style="left:5px;top:855.69px;font-size:11px;line-height:11px;color:#34425a;white-space:nowrap;letter-spacing:-0.2px">Selection Set</div>
<svg class="a" style="left:225px;top:858px;" width="7" height="7" viewBox="0 0 7 7"><path d="M1 1l5 5M6 1l-5 5" stroke="#000" stroke-width="1.9"/></svg>
<div class="a" style="left:3px;top:870px;width:231px;height:155px;background:#f0f0f0;border-top:1px solid #6b6b6b;border-left:2px solid #6b6b6b;border-right:1px solid #e3e3e3;border-bottom:1px solid #fff;box-shadow:inset 1px 1px 0 #fff"></div>
<div class="a" style="left:11px;top:875px;width:21px;height:18px;border:1px solid #6d6d6d;border-radius:3px;background:linear-gradient(#f6f6f6,#e8e8e8)"></div>
<div class="a" style="left:35px;top:875px;width:21px;height:18px;border:1px solid #b5b5b5;border-radius:3px;background:linear-gradient(#f6f6f6,#e8e8e8)"></div>
<div class="a" style="left:59px;top:875px;width:21px;height:18px;border:1px solid #b5b5b5;border-radius:3px;background:linear-gradient(#f6f6f6,#e8e8e8)"></div>
<div class="a" style="left:83px;top:875px;width:21px;height:18px;border:1px solid #b5b5b5;border-radius:3px;background:linear-gradient(#f6f6f6,#e8e8e8)"></div>
<div class="a" style="left:107px;top:875px;width:21px;height:18px;border:1px solid #b5b5b5;border-radius:3px;background:linear-gradient(#f6f6f6,#e8e8e8)"></div>
<svg class="a" style="left:14px;top:877px;" width="16" height="15" viewBox="0 0 16 15"><path d="M1.5 1.5h8v12h-8z" fill="#fff" stroke="#000" stroke-width="1.1"/><path d="M3 4h5M3 6h5M3 8h5M3 10h5M3 12h5" stroke="#000"/><path d="M13 1v13M11 3l2-2 2 2M11 12l2 2 2-2" fill="none" stroke="#000" stroke-width="1.1"/></svg>
<svg class="a" style="left:38px;top:877px;" width="16" height="15" viewBox="0 0 16 15"><path d="M8 2l5 5h-3v2c0 2-2 4-3 5l-1-1c1-1 1-2 1-3v-3h-3z" fill="#808080"/></svg>
<svg class="a" style="left:62px;top:877px;" width="16" height="15" viewBox="0 0 16 15"><path d="M8 14l5-5h-3v-2c0-2-2-4-3-5l-1 1c1 1 1 2 1 3v3h-3z" fill="#808080"/></svg>
<svg class="a" style="left:86px;top:877px;" width="16" height="15" viewBox="0 0 16 15"><path d="M2 2l11 11M13 2l-11 11" stroke="#c06060" stroke-width="1.4"/></svg>
<svg class="a" style="left:110px;top:877px;" width="15" height="14" viewBox="0 0 15 14"><rect x="0.5" y="0.5" width="14" height="13" fill="#f4f4f4" stroke="#555"/><rect x="1" y="1" width="13" height="2" fill="#6060ff"/><path d="M2 5h11M2 8h11M2 11h11" stroke="#c0c0c0"/><path d="M2 3l11 10M13 3l-11 10" stroke="#c07070" stroke-width="1.5"/></svg>
<div class="a" style="left:134px;top:878.69px;font-size:11px;line-height:11px;color:#000;white-space:nowrap;letter-spacing:-0.3px">3 Entities</div>
<div class="a" style="left:10px;top:895px;width:223px;height:113px;border:1px solid #828790;border-bottom:none;background:#fff"></div>
<div class="a" style="left:11px;top:896px;width:221px;height:25px;background:#f0f0f0;"></div>
<div class="a" style="left:19px;top:903.69px;font-size:11px;line-height:11px;color:#000;white-space:nowrap;letter-spacing:-0.3px">Name</div>
<div class="a" style="left:162px;top:903.69px;font-size:11px;line-height:11px;color:#000;white-space:nowrap;letter-spacing:-0.3px">Type</div>
<div class="a" style="left:35px;top:924.69px;font-size:11px;line-height:11px;color:#000;white-space:nowrap;letter-spacing:-0.3px">contact</div>
<div class="a" style="left:162px;top:924.69px;font-size:11px;line-height:11px;color:#000;white-space:nowrap;letter-spacing:-0.3px">B-spline S...</div>
<div class="a" style="left:35px;top:941.69px;font-size:11px;line-height:11px;color:#000;white-space:nowrap;letter-spacing:-0.3px">n1</div>
<div class="a" style="left:162px;top:941.69px;font-size:11px;line-height:11px;color:#000;white-space:nowrap;letter-spacing:-0.3px">Projected ...</div>
<div class="a" style="left:35px;top:958.69px;font-size:11px;line-height:11px;color:#000;white-space:nowrap;letter-spacing:-0.3px">apex</div>
<div class="a" style="left:162px;top:958.69px;font-size:11px;line-height:11px;color:#000;white-space:nowrap;letter-spacing:-0.3px">B-spline C...</div>
<div class="a" style="left:5px;top:1008px;width:227px;height:16px;background:#f0f0f0;"></div>
<svg class="a" style="left:11px;top:1012px;" width="5" height="8" viewBox="0 0 5 8"><path d="M4 0v8l-4-4z" fill="#606060"/></svg>
<svg class="a" style="left:221px;top:1012px;" width="5" height="8" viewBox="0 0 5 8"><path d="M0 0v8l4-4z" fill="#606060"/></svg>
<div class="a" style="left:23px;top:1008px;width:181px;height:15px;border:1px solid #959595;border-radius:2px;background:linear-gradient(#f4f4f4,#e6e6e6 50%,#d6d6d6)"></div>
<svg class="a" style="left:108px;top:1013px;" width="8" height="6" viewBox="0 0 8 6"><path d="M0.5 0v6M3.5 0v6M6.5 0v6" stroke="#505050"/></svg>
<div class="a" style="left:238px;top:103px;width:1162px;height:929px;background:#fff;"></div>
<div class="a" style="left:238px;top:103px;width:1162px;height:1px;background:#6b6b6b;"></div>
<div class="a" style="left:238px;top:103px;width:2px;height:926px;background:#6b6b6b;"></div>
<div class="a" style="left:240px;top:104px;width:1158px;height:1px;background:#a0a0a0;"></div>
<div class="a" style="left:240px;top:104px;width:1px;height:924px;background:#a0a0a0;"></div>
<div class="a" style="left:241px;top:105px;width:1156px;height:1px;background:#6b6b6b;"></div>
<div class="a" style="left:241px;top:105px;width:1px;height:922px;background:#6b6b6b;"></div>
<div class="a" style="left:1396px;top:105px;width:1px;height:923px;background:#e3e3e3;"></div>
<div class="a" style="left:241px;top:1027px;width:1156px;height:1px;background:#e3e3e3;"></div>
<div class="a" style="left:1399px;top:103px;width:1px;height:926px;background:#e3e3e3;"></div>
<div class="a" style="left:238px;top:1029px;width:1162px;height:1px;background:#e3e3e3;"></div>
<svg class="a" style="left:242px;top:106px;overflow:hidden" width="1154" height="921" viewBox="242 106 1154 921">
<defs>
<linearGradient id="tg" gradientUnits="userSpaceOnUse" x1="368" y1="537.5" x2="436.6" y2="371"><stop offset="0" stop-color="#038888"/><stop offset="1" stop-color="#007878"/></linearGradient>
<linearGradient id="rg" gradientUnits="userSpaceOnUse" x1="760" y1="480" x2="984" y2="648"><stop offset="0" stop-color="#6a6a6a"/><stop offset="0.36" stop-color="#5a5a5a"/><stop offset="0.71" stop-color="#3e3e3e"/><stop offset="1" stop-color="#202020"/></linearGradient>
<linearGradient id="rdg" gradientUnits="userSpaceOnUse" x1="696" y1="457" x2="955" y2="667"><stop offset="0" stop-color="#404040" stop-opacity="0"/><stop offset="0.25" stop-color="#404040" stop-opacity="0.1"/><stop offset="0.5" stop-color="#404040" stop-opacity="0.6"/><stop offset="1" stop-color="#202020" stop-opacity="0.9"/></linearGradient>
<clipPath id="rc"><path d="M680.3 440.5 L685.3 444.0 L690.4 447.4 L695.4 450.8 L700.5 454.2 L705.6 457.5 L710.7 460.8 L715.8 464.0 L721.0 467.2 L726.1 470.4 L731.3 473.6 L736.5 476.8 L741.7 479.9 L746.9 483.0 L752.1 486.1 L757.3 489.3 L762.5 492.4 L767.7 495.6 L772.9 498.7 L778.1 502.0 L783.2 505.2 L788.3 508.5 L793.4 511.8 L798.5 515.2 L803.6 518.6 L808.6 522.1 L813.6 525.6 L818.5 529.1 L823.4 532.7 L828.3 536.4 L833.2 540.1 L838.0 543.8 L842.8 547.6 L847.5 551.4 L852.2 555.3 L856.8 559.3 L861.4 563.2 L866.0 567.3 L870.5 571.4 L874.9 575.5 L879.3 579.7 L883.7 584.0 L888.0 588.3 L892.2 592.7 L896.4 597.1 L900.6 601.5 L904.7 606.0 L908.7 610.6 L912.7 615.2 L916.7 619.8 L920.6 624.5 L924.4 629.2 L928.3 633.9 L932.1 638.7 L935.8 643.6 L939.5 648.4 L943.1 653.3 L946.8 658.2 L950.3 663.1 L953.9 668.1 L954.0 690.0 L1060.0 690.0 L1060.0 400.0 L696.0 400.0 Z"/></clipPath>
<filter id="rf2" x="-20%" y="-20%" width="140%" height="140%"><feGaussianBlur stdDeviation="8"/></filter>
<linearGradient id="rbase" gradientUnits="userSpaceOnUse" x1="700" y1="450" x2="990" y2="650"><stop offset="0" stop-color="#7a7a7a"/><stop offset="0.3" stop-color="#5a5a5a"/><stop offset="1" stop-color="#2a2a2a"/></linearGradient>
<linearGradient id="rbk" gradientUnits="userSpaceOnUse" x1="740" y1="470" x2="990" y2="650"><stop offset="0" stop-color="#000" stop-opacity="0"/><stop offset="0.5" stop-color="#000" stop-opacity="0.08"/><stop offset="1" stop-color="#000" stop-opacity="0.3"/></linearGradient>
<linearGradient id="mid" gradientUnits="userSpaceOnUse" x1="690" y1="455" x2="910" y2="640"><stop offset="0" stop-color="#000" stop-opacity="0"/><stop offset="0.45" stop-color="#000" stop-opacity="0.1"/><stop offset="1" stop-color="#000" stop-opacity="0.03"/></linearGradient>
<clipPath id="bc"><path d="M529.1 547.7 L531.8 543.6 L534.7 539.6 L537.6 535.5 L540.7 531.3 L543.9 527.2 L547.2 523.0 L550.7 518.8 L554.2 514.7 L557.8 510.6 L561.6 506.5 L565.4 502.4 L569.3 498.4 L573.3 494.5 L577.4 490.6 L581.6 486.8 L585.9 483.1 L590.2 479.6 L594.6 476.1 L599.1 472.7 L603.7 469.5 L608.3 466.4 L613.0 463.5 L617.8 460.7 L622.6 458.1 L627.4 455.7 L632.3 453.5 L637.3 451.5 L642.3 449.7 L647.3 448.1 L652.4 446.7 L657.5 445.6 L662.6 444.7 L667.8 444.1 L673.0 443.8 L678.2 443.7 L683.4 444.0 L688.7 444.5 L693.9 445.4 L699.2 446.5 L704.5 448.0 L709.7 449.8 L715.0 451.8 L720.3 454.0 L725.5 456.1 L730.6 458.3 L735.8 460.3 L740.8 462.3 L745.9 464.1 L750.9 465.9 L755.8 467.8 L760.7 469.7 L765.6 471.7 L770.5 473.8 L775.3 476.0 L780.1 478.2 L784.9 480.5 L789.7 482.9 L794.4 485.4 L799.1 487.9 L803.9 490.5 L808.6 493.1 L813.2 495.7 L817.9 498.4 L822.6 501.2 L827.2 503.9 L831.9 506.7 L836.6 509.5 L841.2 512.3 L845.9 515.1 L850.5 518.0 L855.2 520.8 L859.8 523.7 L864.5 526.5 L869.1 529.4 L873.7 532.3 L878.4 535.2 L883.0 538.2 L887.5 541.1 L892.1 544.1 L896.7 547.1 L901.2 550.2 L905.7 553.3 L910.1 556.4 L914.6 559.5 L919.0 562.7 L923.4 565.9 L927.7 569.2 L932.0 572.5 L936.3 575.9 L940.5 579.3 L944.7 582.8 L948.8 586.3 L952.9 589.8 L956.9 593.5 L960.9 597.2 L964.8 600.9 L968.7 604.7 L972.5 608.6 L976.2 612.5 L979.9 616.6 L983.5 620.6 L987.1 624.8 L990.5 629.0 L993.4 633.3 L995.4 637.5 L996.2 641.6 L995.4 645.5 L992.7 649.3 L988.7 652.8 L983.9 656.0 L978.9 658.8 L973.8 661.4 L968.7 663.6 L963.4 665.6 L958.1 667.3 L952.8 668.8 L947.3 670.1 L941.9 671.1 L936.4 672.0 L930.9 672.7 L925.4 673.3 L919.9 673.8 L914.4 674.1 L908.9 674.4 L903.5 674.5 L898.0 674.6 L892.6 674.6 L887.2 674.4 L881.8 674.2 L876.4 673.9 L871.0 673.6 L865.6 673.1 L860.2 672.6 L854.9 672.0 L849.6 671.4 L844.2 670.7 L838.9 669.9 L833.6 669.0 L828.3 668.1 L823.0 667.2 L817.7 666.1 L812.4 665.1 L807.1 664.0 L801.9 662.8 L796.6 661.6 L791.4 660.4 L786.1 659.1 L780.9 657.8 L775.7 656.4 L770.5 655.0 L765.2 653.6 L760.0 652.1 L754.9 650.6 L749.7 649.1 L744.5 647.5 L739.3 645.9 L734.2 644.2 L729.0 642.5 L723.9 640.8 L718.8 639.0 L713.7 637.2 L708.6 635.4 L703.5 633.5 L698.4 631.7 L693.3 629.7 L688.2 627.8 L683.2 625.8 L678.1 623.8 L673.1 621.7 L668.1 619.6 L663.1 617.5 L658.1 615.4 L653.1 613.2 L648.2 611.0 L643.2 608.8 L638.3 606.6 L633.3 604.3 L628.4 602.0 L623.5 599.6 L618.6 597.3 L613.8 594.9 L608.9 592.5 L604.0 590.1 L599.2 587.6 L594.4 585.1 L589.6 582.6 L584.8 580.1 L580.0 577.6 L575.3 575.0 L570.5 572.4 L565.8 569.8 L561.1 567.2 L556.4 564.5 L551.7 561.9 L547.1 559.2 L542.4 556.5 L537.8 553.7 L533.2 551.0 L528.6 548.2 Z"/></clipPath>
<filter id="bf" x="-20%" y="-20%" width="140%" height="140%"><feGaussianBlur stdDeviation="8"/></filter>
<filter id="rf" x="-20%" y="-20%" width="140%" height="140%"><feGaussianBlur stdDeviation="4"/></filter>
</defs>
<path d="M391.0 482.3 L395.5 481.1 L400.1 479.9 L404.6 478.7 L409.2 477.6 L413.7 476.4 L418.3 475.3 L422.9 474.2 L427.4 473.1 L432.0 472.1 L436.6 471.0 L441.2 470.0 L445.8 468.9 L450.4 467.9 L455.0 466.9 L459.6 465.9 L464.2 465.0 L468.8 464.1 L473.4 463.1 L478.0 462.2 L482.6 461.3 L487.3 460.5 L491.9 459.6 L496.5 458.8 L501.2 458.0 L505.8 457.2 L510.4 456.5 L515.1 455.7 L519.7 455.0 L524.4 454.3 L529.0 453.6 L533.7 453.0 L538.3 452.3 L543.0 451.7 L547.7 451.1 L552.3 450.6 L557.0 450.0 L561.7 449.5 L566.3 449.0 L571.0 448.6 L575.7 448.1 L580.4 447.7 L585.1 447.3 L589.8 446.9 L594.5 446.6 L599.1 446.3 L603.8 446.0 L608.5 445.7 L613.2 445.5 L617.9 445.3 L622.6 445.1 L627.3 445.0 L632.0 444.9 L636.7 444.8 L641.5 444.7 L646.2 444.7 L650.9 444.7 L655.6 444.7 L660.3 444.8 L665.0 444.9 L720.0 470.0 L800.0 500.0 L843.6 512.5 L849.1 514.9 L854.5 517.2 L859.9 519.6 L865.2 522.0 L870.6 524.4 L876.0 526.8 L881.3 529.3 L886.6 531.8 L891.9 534.3 L897.2 536.8 L902.5 539.3 L907.7 541.9 L913.0 544.5 L918.2 547.1 L923.4 549.7 L928.6 552.4 L933.8 555.0 L939.0 557.7 L944.2 560.4 L949.3 563.1 L954.4 565.9 L959.6 568.6 L964.7 571.4 L969.8 574.2 L974.8 577.0 L979.9 579.9 L985.0 582.7 L990.0 585.6 L995.0 588.5 L1000.1 591.4 L1005.1 594.3 L1010.1 597.3 L1015.0 600.3 L1020.0 603.2 L1025.0 606.2 L1029.9 609.2 L1034.9 612.3 L1039.8 615.3 L1044.7 618.4 L1049.6 621.5 L1054.5 624.6 L1059.4 627.7 L1064.2 630.8 L1069.1 634.0 L1073.9 637.1 L1078.8 640.3 L1083.6 643.5 L1088.4 646.7 L1093.2 649.9 L1098.0 653.2 L1102.8 656.4 L1107.6 659.7 L1112.3 663.0 L1117.1 666.3 L1121.8 669.6 L1126.6 672.9 L1131.3 676.2 L1136.0 679.6 L1140.7 683.0 L1145.4 686.3 L1150.1 689.7 L1154.8 693.1 L1159.5 696.6 L1164.1 700.0 L1168.8 703.4 L1173.4 706.9 L1178.1 710.4 L1182.7 713.9 L1187.3 717.4 L1191.9 720.9 L1196.5 724.4 L1201.1 727.9 L1205.7 731.5 L1210.3 735.0 L1214.9 738.6 L1219.5 742.2 L1224.0 745.7 L1228.6 749.3 L1233.1 752.9 L1237.7 756.6 L1242.2 760.2 L1246.7 763.8 L1251.3 767.5 L1255.8 771.2 L1260.3 774.8 L1264.8 778.5 L1269.3 782.2 L1273.8 785.9 L1278.3 789.6 L1282.7 793.3 L1287.2 797.0 L1291.7 800.8 L1296.2 804.5 L1300.6 808.3 L1305.1 812.0 L1309.5 815.8 L1314.0 819.6 L1318.4 823.4 L1322.8 827.2 L1327.3 831.0 L1331.7 834.8 L1336.1 838.6 L1340.5 842.4 L1344.9 846.2 L1349.4 850.1 L1353.8 853.9 L1358.2 857.8 L1362.6 861.6 L1367.0 865.5 L1371.3 869.4 L1375.7 873.2 L1380.1 877.1 L1384.5 881.0 L1388.9 884.9 L1393.3 888.8 L1397.6 892.7 L1402.0 896.6 L1406.4 900.5 L1410.7 904.4 L1411.3 903.3 L1404.6 901.4 L1397.8 899.4 L1391.1 897.5 L1384.4 895.5 L1377.6 893.6 L1370.9 891.6 L1364.1 889.6 L1357.4 887.7 L1350.7 885.7 L1344.0 883.7 L1337.2 881.7 L1330.5 879.8 L1323.8 877.8 L1317.1 875.8 L1310.4 873.8 L1303.7 871.8 L1296.9 869.8 L1290.2 867.8 L1283.5 865.8 L1276.8 863.8 L1270.1 861.8 L1263.4 859.8 L1256.7 857.7 L1250.0 855.7 L1243.3 853.7 L1236.6 851.6 L1230.0 849.6 L1223.3 847.5 L1216.6 845.5 L1209.9 843.4 L1203.2 841.4 L1196.6 839.3 L1189.9 837.2 L1183.2 835.2 L1176.5 833.1 L1169.9 831.0 L1163.2 828.9 L1156.5 826.8 L1149.9 824.7 L1143.2 822.6 L1136.6 820.5 L1129.9 818.4 L1123.3 816.2 L1116.6 814.1 L1110.0 812.0 L1103.3 809.8 L1096.7 807.7 L1090.0 805.5 L1083.4 803.3 L1076.8 801.2 L1070.1 799.0 L1063.5 796.8 L1056.9 794.6 L1050.3 792.4 L1043.6 790.2 L1037.0 788.0 L1030.4 785.8 L1023.8 783.6 L1017.2 781.3 L1010.6 779.1 L1004.0 776.8 L997.4 774.6 L990.8 772.3 L984.2 770.0 L977.6 767.7 L971.0 765.5 L964.4 763.2 L957.8 760.8 L951.2 758.5 L944.6 756.2 L938.1 753.9 L931.5 751.5 L924.9 749.2 L918.3 746.8 L911.8 744.5 L905.2 742.1 L898.6 739.7 L892.1 737.3 L885.5 734.9 L879.0 732.5 L872.4 730.1 L865.9 727.6 L859.3 725.2 L852.8 722.8 L846.2 720.3 L839.7 717.8 L833.2 715.3 L826.6 712.9 L820.1 710.4 L813.6 707.8 L807.0 705.3 L800.5 702.8 L794.0 700.3 L787.5 697.7 L781.0 695.1 L774.5 692.6 L768.0 690.0 L761.5 687.4 L755.0 684.8 L748.5 682.2 L742.0 679.5 L735.5 676.9 L729.0 674.2 L722.5 671.6 L716.1 668.9 L709.6 666.2 L703.1 663.5 L696.7 660.8 L690.2 658.0 L683.8 655.2 L677.4 652.5 L670.9 649.7 L664.5 646.8 L658.1 644.0 L651.7 641.1 L645.4 638.2 L639.0 635.3 L632.7 632.4 L626.3 629.4 L620.0 626.5 L613.7 623.5 L607.4 620.4 L601.1 617.4 L594.8 614.3 L588.6 611.2 L582.4 608.0 L576.1 604.9 L569.9 601.7 L563.8 598.4 L557.6 595.2 L551.5 591.9 L545.3 588.6 L539.2 585.2 L533.1 581.8 L527.1 578.4 L521.0 574.9 L515.0 571.4 L509.0 567.9 L503.1 564.3 L497.1 560.7 L491.2 557.1 L485.3 553.4 L479.4 549.7 L473.6 545.9 L467.7 542.1 L462.0 538.2 L456.2 534.3 L450.5 530.4 L444.7 526.4 L439.1 522.4 L433.4 518.4 L427.8 514.2 L422.2 510.1 L416.6 505.9 L411.1 501.6 L405.6 497.3 L400.1 493.0 L394.7 488.6 L389.3 484.1 Z" fill="url(#tg)"/>
<g clip-path="url(#bc)">
<rect x="480" y="420" width="540" height="300" fill="#262626"/>
<g filter="url(#bf)">
<path d="M940.0 560.0 L942.0 562.4 L943.9 564.8 L945.8 567.2 L947.6 569.7 L949.4 572.2 L951.1 574.7 L952.7 577.3 L954.3 579.8 L955.9 582.5 L957.4 585.1 L958.8 587.8 L960.3 590.5 L961.6 593.2 L962.9 596.0 L964.2 598.7 L965.4 601.5 L966.5 604.4 L967.7 607.2 L968.7 610.1 L969.8 612.9 L970.8 615.8 L971.7 618.7 L972.6 621.7 L973.5 624.6 L974.3 627.6 L975.1 630.5 L975.9 633.5 L976.6 636.5 L977.3 639.5 L978.0 642.5 L978.6 645.5 L979.2 648.5 L979.7 651.6 L980.3 654.6 L980.8 657.6 L981.2 660.7 L981.7 663.7 L982.1 666.8 L982.5 669.8 L982.8 672.8 L983.1 675.9 L983.5 678.9 L983.7 681.9 L984.0 685.0 L984.2 688.0 L984.5 691.0 L984.7 694.0 L984.8 697.0 L985.0 700.0 L985.0 720.0 L480.0 720.0 L480.0 560.0 Z" fill="#353535"/>
<path d="M879.3 500.5 L882.1 504.0 L885.0 507.5 L887.8 511.0 L890.7 514.6 L893.5 518.1 L896.3 521.7 L899.1 525.3 L901.9 528.9 L904.6 532.5 L907.3 536.2 L910.0 539.8 L912.6 543.5 L915.2 547.2 L917.7 550.9 L920.2 554.7 L922.6 558.5 L925.0 562.3 L927.3 566.1 L929.6 569.9 L931.8 573.8 L933.9 577.7 L935.9 581.7 L937.9 585.7 L939.8 589.7 L941.6 593.7 L943.3 597.8 L944.9 601.9 L946.5 606.1 L948.0 610.3 L949.3 614.5 L950.6 618.7 L951.8 623.0 L953.0 627.3 L954.0 631.6 L954.9 636.0 L955.8 640.4 L956.5 644.8 L957.2 649.3 L957.7 653.8 L958.2 658.3 L958.5 662.8 L958.8 667.4 L959.0 672.0 L959.0 676.6 L959.0 681.3 L958.8 686.0 L958.6 690.7 L958.2 695.4 L957.7 700.2 L957.7 720.0 L480.0 720.0 L480.0 500.5 Z" fill="#464646"/>
<path d="M778.9 441.1 L783.3 445.4 L787.8 449.6 L792.3 453.9 L796.8 458.2 L801.3 462.5 L805.8 466.8 L810.3 471.1 L814.9 475.4 L819.4 479.8 L823.9 484.2 L828.4 488.6 L832.8 493.1 L837.2 497.6 L841.5 502.1 L845.8 506.7 L850.0 511.4 L854.2 516.0 L858.3 520.8 L862.2 525.6 L866.1 530.4 L869.9 535.4 L873.6 540.4 L877.1 545.4 L880.6 550.6 L883.8 555.8 L887.0 561.1 L890.0 566.5 L892.8 571.9 L895.5 577.5 L898.0 583.1 L900.4 588.8 L902.6 594.6 L904.7 600.5 L906.5 606.4 L908.3 612.4 L909.9 618.5 L911.3 624.6 L912.6 630.7 L913.8 636.9 L914.8 643.1 L915.7 649.4 L916.4 655.7 L917.0 662.0 L917.4 668.4 L917.7 674.7 L917.9 681.1 L918.0 687.5 L917.9 693.9 L917.7 700.3 L917.7 720.0 L480.0 720.0 L480.0 441.1 Z" fill="#5c5c5c"/>
<path d="M719.4 431.1 L724.3 435.6 L729.5 440.0 L734.8 444.3 L740.3 448.4 L745.9 452.4 L751.7 456.3 L757.5 460.2 L763.4 464.0 L769.4 467.8 L775.4 471.5 L781.4 475.3 L787.3 479.1 L793.3 482.9 L799.2 486.8 L805.0 490.7 L810.7 494.7 L816.3 498.9 L821.8 503.2 L827.1 507.6 L832.2 512.2 L837.1 516.9 L841.8 521.9 L846.3 527.1 L850.5 532.5 L854.4 538.1 L858.1 543.9 L861.6 549.9 L864.8 556.1 L867.8 562.4 L870.7 568.9 L873.3 575.4 L875.7 582.1 L877.9 588.9 L880.0 595.8 L881.9 602.8 L883.6 609.8 L885.2 616.9 L886.6 623.9 L887.9 631.0 L889.1 638.2 L890.1 645.2 L891.0 652.3 L891.9 659.3 L892.6 666.3 L893.2 673.2 L893.7 680.1 L894.2 686.8 L894.6 693.4 L895.0 699.9 L895.0 720.0 L480.0 720.0 L480.0 431.1 Z" fill="#757575"/>
<path d="M619.4 431.1 L627.8 432.1 L636.1 433.3 L644.4 434.7 L652.7 436.3 L660.9 438.2 L669.0 440.3 L677.0 442.6 L685.0 445.1 L692.9 447.8 L700.7 450.7 L708.4 453.9 L716.0 457.3 L723.5 460.8 L730.8 464.6 L738.1 468.6 L745.2 472.8 L752.1 477.1 L758.9 481.7 L765.6 486.5 L772.1 491.4 L778.5 496.6 L784.7 501.9 L790.7 507.4 L796.5 513.1 L802.1 519.0 L807.5 525.1 L812.8 531.3 L817.8 537.7 L822.6 544.3 L827.2 551.0 L831.5 558.0 L835.7 565.0 L839.6 572.3 L843.3 579.6 L846.7 587.1 L850.0 594.7 L853.0 602.4 L855.8 610.2 L858.4 618.2 L860.7 626.2 L862.8 634.2 L864.7 642.4 L866.4 650.6 L867.8 658.8 L869.0 667.1 L870.0 675.4 L870.7 683.8 L871.3 692.1 L871.6 700.5 L871.6 720.0 L480.0 720.0 L480.0 431.1 Z" fill="#8e8e8e"/>
<path d="M584.3 451.5 L590.9 455.7 L597.7 459.8 L604.6 463.6 L611.5 467.3 L618.6 470.9 L625.8 474.3 L633.0 477.7 L640.3 480.9 L647.7 484.1 L655.0 487.3 L662.4 490.5 L669.8 493.6 L677.3 496.8 L684.7 500.0 L692.1 503.2 L699.5 506.5 L706.9 509.9 L714.2 513.3 L721.5 516.8 L728.7 520.5 L735.9 524.2 L743.0 528.2 L750.0 532.2 L757.0 536.5 L763.8 540.9 L770.5 545.5 L777.2 550.3 L783.6 555.3 L789.9 560.4 L796.1 565.8 L802.0 571.3 L807.8 577.0 L813.3 582.9 L818.6 589.0 L823.6 595.2 L828.4 601.6 L832.8 608.2 L837.0 615.0 L840.9 621.9 L844.4 629.0 L847.6 636.3 L850.4 643.7 L852.8 651.3 L854.8 659.1 L856.4 667.0 L857.6 675.0 L858.4 683.3 L858.6 691.6 L858.4 700.2 L858.4 720.0 L480.0 720.0 L480.0 451.5 Z" fill="#b0b0b0"/>
<path d="M584.5 475.5 L589.8 480.9 L595.2 486.0 L600.8 490.7 L606.6 495.1 L612.6 499.3 L618.7 503.2 L625.0 506.9 L631.3 510.4 L637.8 513.7 L644.4 516.8 L651.1 519.8 L657.8 522.7 L664.6 525.6 L671.4 528.3 L678.3 531.1 L685.2 533.8 L692.0 536.5 L698.9 539.2 L705.8 542.0 L712.6 544.9 L719.3 547.9 L726.0 551.0 L732.7 554.3 L739.2 557.7 L745.6 561.3 L751.9 565.2 L758.1 569.2 L764.2 573.5 L770.1 577.9 L775.9 582.6 L781.6 587.4 L787.1 592.4 L792.4 597.5 L797.6 602.9 L802.6 608.4 L807.4 614.0 L812.1 619.8 L816.5 625.7 L820.8 631.8 L824.8 638.0 L828.6 644.3 L832.0 650.7 L835.2 657.3 L838.0 664.1 L840.4 670.9 L842.4 677.9 L843.9 685.1 L845.0 692.4 L845.5 699.8 L845.5 720.0 L480.0 720.0 L480.0 475.5 Z" fill="#e0e0e0"/>
<path d="M559.4 480.6 L564.3 486.5 L569.7 491.9 L575.4 496.7 L581.5 501.0 L587.9 505.0 L594.4 508.6 L601.2 511.9 L608.1 515.1 L615.0 518.1 L621.9 521.1 L628.8 524.0 L635.7 526.9 L642.6 529.8 L649.4 532.7 L656.3 535.6 L663.2 538.5 L670.0 541.5 L676.9 544.5 L683.8 547.5 L690.7 550.6 L697.6 553.8 L704.5 557.1 L711.4 560.4 L718.3 563.9 L725.1 567.5 L732.0 571.1 L738.7 574.9 L745.4 578.8 L752.0 582.9 L758.5 587.0 L764.8 591.4 L771.0 595.8 L777.1 600.4 L783.0 605.2 L788.7 610.1 L794.2 615.2 L799.5 620.5 L804.5 626.0 L809.3 631.6 L813.9 637.5 L818.1 643.5 L822.1 649.7 L825.7 656.2 L829.0 662.9 L831.8 669.8 L834.1 677.0 L835.7 684.4 L836.7 692.0 L837.0 700.0 L837.0 720.0 L480.0 720.0 L480.0 480.6 Z" fill="#ffffff"/>
</g>
<path d="M584.5 475.5 L589.8 480.9 L595.2 486.0 L600.8 490.7 L606.6 495.1 L612.6 499.3 L618.7 503.2 L625.0 506.9 L631.3 510.4 L637.8 513.7 L644.4 516.8 L651.1 519.8 L657.8 522.7 L664.6 525.6 L671.4 528.3 L678.3 531.1 L685.2 533.8 L692.0 536.5 L698.9 539.2 L705.8 542.0 L712.6 544.9 L719.3 547.9 L726.0 551.0 L732.7 554.3 L739.2 557.7 L745.6 561.3 L751.9 565.2 L758.1 569.2 L764.2 573.5 L770.1 577.9 L775.9 582.6 L781.6 587.4 L787.1 592.4 L792.4 597.5 L797.6 602.9 L802.6 608.4 L807.4 614.0 L812.1 619.8 L816.5 625.7 L820.8 631.8 L824.8 638.0 L828.6 644.3 L832.0 650.7 L835.2 657.3 L838.0 664.1 L840.4 670.9 L842.4 677.9 L843.9 685.1 L845.0 692.4 L845.5 699.8 L845.5 720.0 L1060.0 720.0 L1060.0 400.0 L584.5 400.0 Z" fill="url(#mid)" filter="url(#rf)"/>
<g clip-path="url(#rc)">
<path d="M680.3 440.5 L685.3 444.0 L690.4 447.4 L695.4 450.8 L700.5 454.2 L705.6 457.5 L710.7 460.8 L715.8 464.0 L721.0 467.2 L726.1 470.4 L731.3 473.6 L736.5 476.8 L741.7 479.9 L746.9 483.0 L752.1 486.1 L757.3 489.3 L762.5 492.4 L767.7 495.6 L772.9 498.7 L778.1 502.0 L783.2 505.2 L788.3 508.5 L793.4 511.8 L798.5 515.2 L803.6 518.6 L808.6 522.1 L813.6 525.6 L818.5 529.1 L823.4 532.7 L828.3 536.4 L833.2 540.1 L838.0 543.8 L842.8 547.6 L847.5 551.4 L852.2 555.3 L856.8 559.3 L861.4 563.2 L866.0 567.3 L870.5 571.4 L874.9 575.5 L879.3 579.7 L883.7 584.0 L888.0 588.3 L892.2 592.7 L896.4 597.1 L900.6 601.5 L904.7 606.0 L908.7 610.6 L912.7 615.2 L916.7 619.8 L920.6 624.5 L924.4 629.2 L928.3 633.9 L932.1 638.7 L935.8 643.6 L939.5 648.4 L943.1 653.3 L946.8 658.2 L950.3 663.1 L953.9 668.1 L954.0 690.0 L1060.0 690.0 L1060.0 400.0 L696.0 400.0 Z" fill="url(#rbase)"/>
<path d="M680.3 440.5 L685.3 444.0 L690.4 447.4 L695.4 450.8 L700.5 454.2 L705.6 457.5 L710.7 460.8 L715.8 464.0 L721.0 467.2 L726.1 470.4 L731.3 473.6 L736.5 476.8 L741.7 479.9 L746.9 483.0 L752.1 486.1 L757.3 489.3 L762.5 492.4 L767.7 495.6 L772.9 498.7 L778.1 502.0 L783.2 505.2 L788.3 508.5 L793.4 511.8 L798.5 515.2 L803.6 518.6 L808.6 522.1 L813.6 525.6 L818.5 529.1 L823.4 532.7 L828.3 536.4 L833.2 540.1 L838.0 543.8 L842.8 547.6 L847.5 551.4 L852.2 555.3 L856.8 559.3 L861.4 563.2 L866.0 567.3 L870.5 571.4 L874.9 575.5 L879.3 579.7 L883.7 584.0 L888.0 588.3 L892.2 592.7 L896.4 597.1 L900.6 601.5 L904.7 606.0 L908.7 610.6 L912.7 615.2 L916.7 619.8 L920.6 624.5 L924.4 629.2 L928.3 633.9 L932.1 638.7 L935.8 643.6 L939.5 648.4 L943.1 653.3 L946.8 658.2 L950.3 663.1 L953.9 668.1" fill="none" stroke="#808080" stroke-width="36" filter="url(#rf2)"/>
<path d="M680.3 440.5 L685.3 444.0 L690.4 447.4 L695.4 450.8 L700.5 454.2 L705.6 457.5 L710.7 460.8 L715.8 464.0 L721.0 467.2 L726.1 470.4 L731.3 473.6 L736.5 476.8 L741.7 479.9 L746.9 483.0 L752.1 486.1 L757.3 489.3 L762.5 492.4 L767.7 495.6 L772.9 498.7 L778.1 502.0 L783.2 505.2 L788.3 508.5 L793.4 511.8 L798.5 515.2 L803.6 518.6 L808.6 522.1 L813.6 525.6 L818.5 529.1 L823.4 532.7 L828.3 536.4 L833.2 540.1 L838.0 543.8 L842.8 547.6 L847.5 551.4 L852.2 555.3 L856.8 559.3 L861.4 563.2 L866.0 567.3 L870.5 571.4 L874.9 575.5 L879.3 579.7 L883.7 584.0 L888.0 588.3 L892.2 592.7 L896.4 597.1 L900.6 601.5 L904.7 606.0 L908.7 610.6 L912.7 615.2 L916.7 619.8 L920.6 624.5 L924.4 629.2 L928.3 633.9 L932.1 638.7 L935.8 643.6 L939.5 648.4 L943.1 653.3 L946.8 658.2 L950.3 663.1 L953.9 668.1 L954.0 690.0 L1060.0 690.0 L1060.0 400.0 L696.0 400.0 Z" fill="url(#rbk)"/>
</g>
<path d="M680.3 440.5 L685.3 444.0 L690.4 447.4 L695.4 450.8 L700.5 454.2 L705.6 457.5 L710.7 460.8 L715.8 464.0 L721.0 467.2 L726.1 470.4 L731.3 473.6 L736.5 476.8 L741.7 479.9 L746.9 483.0 L752.1 486.1 L757.3 489.3 L762.5 492.4 L767.7 495.6 L772.9 498.7 L778.1 502.0 L783.2 505.2 L788.3 508.5 L793.4 511.8 L798.5 515.2 L803.6 518.6 L808.6 522.1 L813.6 525.6 L818.5 529.1 L823.4 532.7 L828.3 536.4 L833.2 540.1 L838.0 543.8 L842.8 547.6 L847.5 551.4 L852.2 555.3 L856.8 559.3 L861.4 563.2 L866.0 567.3 L870.5 571.4 L874.9 575.5 L879.3 579.7 L883.7 584.0 L888.0 588.3 L892.2 592.7 L896.4 597.1 L900.6 601.5 L904.7 606.0 L908.7 610.6 L912.7 615.2 L916.7 619.8 L920.6 624.5 L924.4 629.2 L928.3 633.9 L932.1 638.7 L935.8 643.6 L939.5 648.4 L943.1 653.3 L946.8 658.2 L950.3 663.1 L953.9 668.1" fill="none" stroke="url(#rdg)" stroke-width="1.1"/>
</g>
</svg>
<div class="a" style="left:0px;top:1030px;width:1400px;height:1px;background:#f0f0f0;"></div>
<div class="a" style="left:0px;top:1031px;width:1400px;height:1px;background:#a0a0a0;"></div>
<div class="a" style="left:0px;top:1032px;width:1400px;height:16px;background:#f1eded;"></div>
<div class="a" style="left:0px;top:1048px;width:1400px;height:1px;background:#404040;"></div>
<div class="a" style="left:0px;top:1049px;width:1400px;height:1px;background:#c5d6ea;"></div>
<div class="a" style="left:3px;top:1035.84px;font-size:12px;line-height:12px;color:#160808;white-space:nowrap;letter-spacing:-0.35px">For Help, press F1.</div>
<div class="a" style="left:564px;top:1035.84px;font-size:12px;line-height:12px;color:#160808;white-space:nowrap;letter-spacing:-0.3px">L:0</div>
<div class="a" style="left:879px;top:1033px;width:1px;height:15px;background:#d4cfcf;"></div>
<div class="a" style="left:991px;top:1033px;width:1px;height:15px;background:#d4cfcf;"></div>
<div class="a" style="left:1079px;top:1033px;width:1px;height:15px;background:#d4cfcf;"></div>
<div class="a" style="left:1167px;top:1033px;width:1px;height:15px;background:#d4cfcf;"></div>
<div class="a" style="left:1295px;top:1033px;width:1px;height:15px;background:#d4cfcf;"></div>
<div class="a" style="left:996px;top:1035.84px;font-size:12px;line-height:12px;color:#160808;white-space:nowrap;letter-spacing:-0.3px">Lat 17.0</div>
<div class="a" style="left:1084px;top:1035.84px;font-size:12px;line-height:12px;color:#160808;white-space:nowrap;letter-spacing:-0.3px">Lon 32.0</div>
<div class="a" style="left:1172px;top:1035.84px;font-size:12px;line-height:12px;color:#160808;white-space:nowrap;letter-spacing:-0.3px">Radius 11.1</div>
<div class="a" style="left:1300px;top:1035.84px;font-size:12px;line-height:12px;color:#160808;white-space:nowrap;letter-spacing:-0.3px">Tilt 0.0</div>
</body></html>
